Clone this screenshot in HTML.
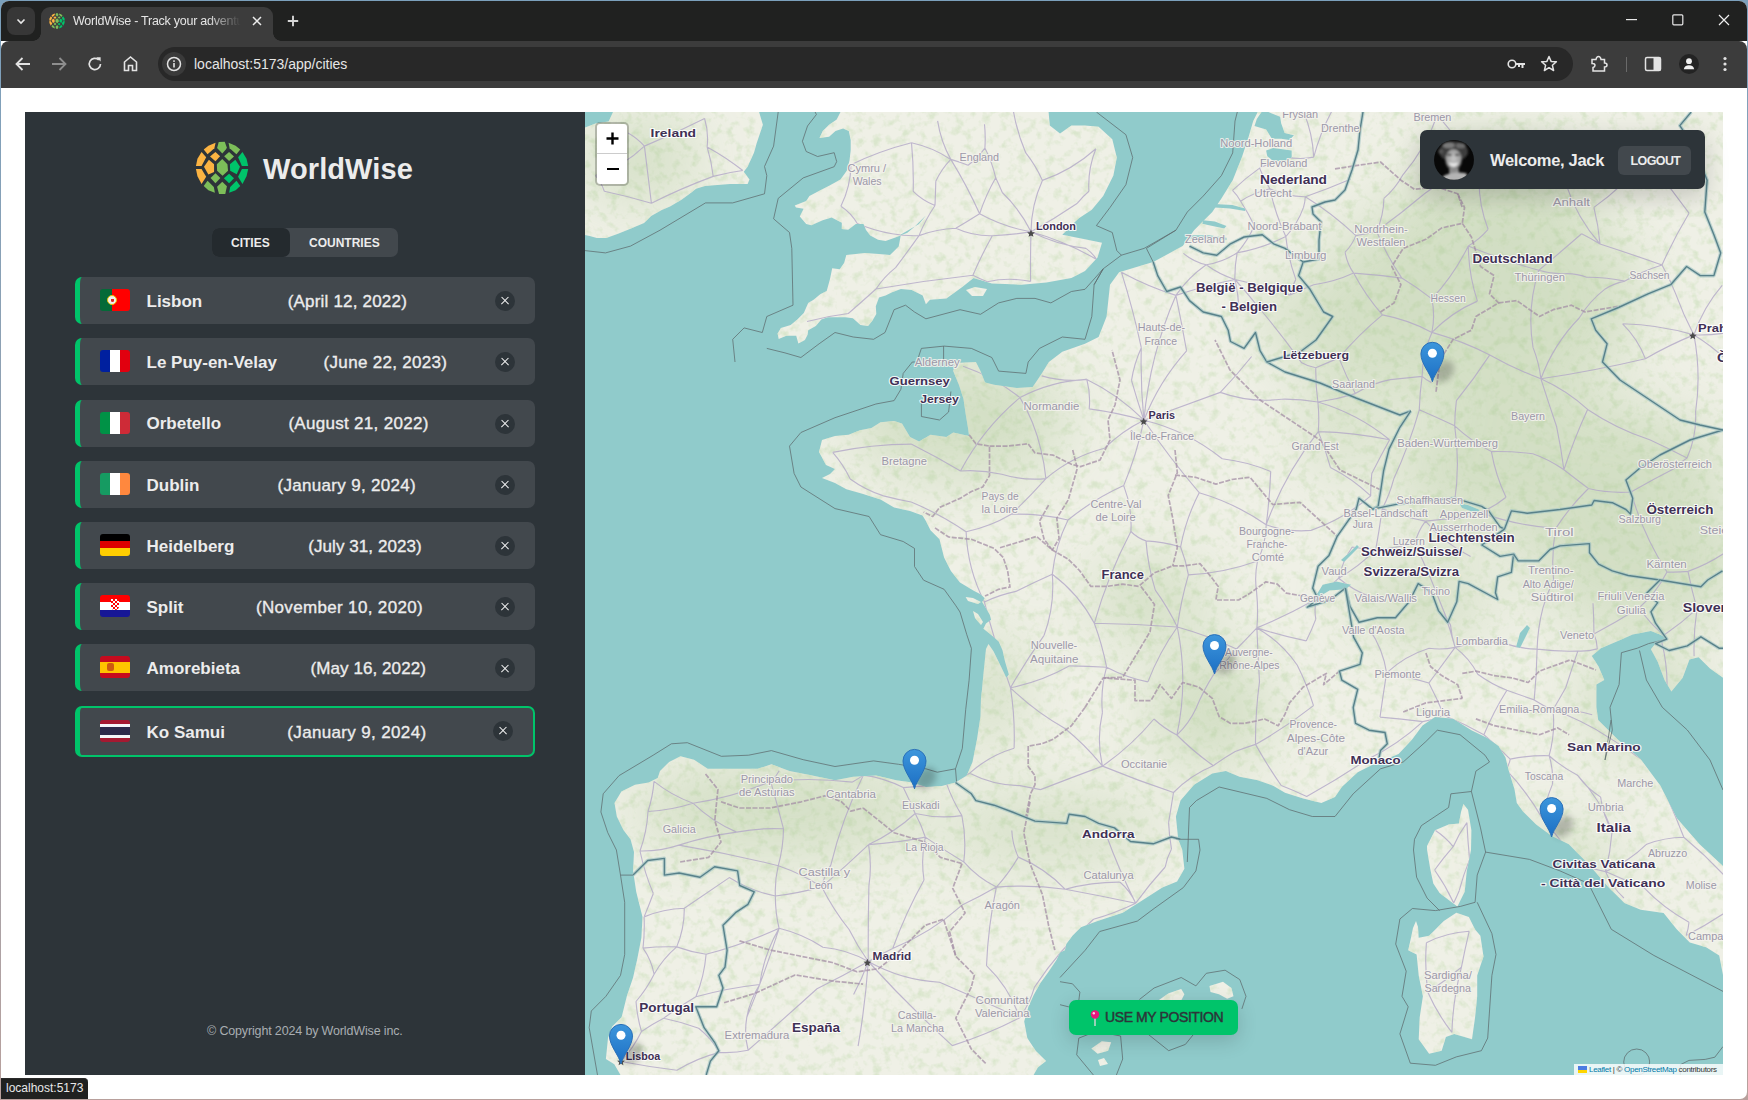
<!DOCTYPE html>
<html><head><meta charset="utf-8">
<style>
*{box-sizing:border-box;margin:0;padding:0}
html,body{width:1748px;height:1100px;overflow:hidden;font-family:"Liberation Sans",sans-serif}
body{background:linear-gradient(#7ba0bc,#a9a3a8 80%,#b8a09c)}
.abs{position:absolute}
#win{position:absolute;left:1px;top:1px;width:1746px;height:1098px;background:#fff;border-radius:8px 8px 7px 7px;overflow:hidden}
#tabstrip{position:absolute;left:1px;top:1px;width:1746px;height:40px;background:#202120;border-radius:8px 8px 0 0}
#toolbar{position:absolute;left:1px;top:41px;width:1746px;height:47px;background:#3c3c3c;border-radius:8px 8px 0 0}
#tab{position:absolute;left:41px;top:7px;width:232px;height:34px;background:#3c3c3c;border-radius:9px 9px 0 0}
#tab:before,#tab:after{content:"";position:absolute;bottom:0;width:8px;height:8px;background:radial-gradient(circle at 0 0,#202120 8px,#3c3c3c 8.5px)}
#tab:before{left:-8px;background:radial-gradient(circle at 0 0,#202120 7.5px,#3c3c3c 8px)}
#tab:after{right:-8px;background:radial-gradient(circle at 100% 0,#202120 7.5px,#3c3c3c 8px)}
#omni{position:absolute;left:158px;top:47px;width:1415px;height:34px;background:#282828;border-radius:17px}
.ico{position:absolute}
#sidebar{position:absolute;left:25px;top:112px;width:560px;height:963px;background:#2d3439}
#map{position:absolute;left:585px;top:112px;width:1138px;height:963px;background:#90cbcb;overflow:hidden}
.item{position:absolute;left:75px;width:460px;height:47px;background:#42484d;border-radius:7px;border-left:5px solid #00c46a}
.item.act{border:2px solid #00c46a;border-left:5px solid #00c46a;height:51px}
.flag{position:absolute;left:20px;top:12px;width:30px;height:22px;border-radius:3px;overflow:hidden}
.cname{position:absolute;left:66.5px;top:14.8px;font-size:17px;line-height:20px;font-weight:bold;color:#ececec;white-space:nowrap}
.cdate{position:absolute;top:14.8px;font-size:17px;line-height:20px;color:#ececec;-webkit-text-stroke:0.35px #ececec;white-space:nowrap}
.del{position:absolute;width:20px;height:20px;border-radius:50%;background:#2d3439}
.del:before,.del:after{content:'';position:absolute;left:5px;top:9.4px;width:10px;height:1.25px;background:#f6f6f6;transform:rotate(45deg)}
.del:after{transform:rotate(-45deg)}
.rl{font-family:'Liberation Sans',sans-serif;font-size:11px;fill:#9c98a8;stroke:#f4f3ee;stroke-width:2.2px;stroke-opacity:.85;paint-order:stroke;stroke-linejoin:round}
.bl{font-family:'Liberation Sans',sans-serif;font-weight:bold;fill:#3f3055;stroke:#fff;stroke-width:2.2px;stroke-opacity:.9;paint-order:stroke;stroke-linejoin:round}
</style></head><body>
<div id="win"></div>
<div id="tabstrip">
</div>
<div id="toolbar"></div>
<div class="abs" style="left:7px;top:7px;width:28px;height:28px;border-radius:8px;background:#373737"></div>
<svg class="ico" style="left:15px;top:15px" width="12" height="12" viewBox="0 0 12 12"><path d="M2.5,4.5 L6,8 L9.5,4.5" fill="none" stroke="#e8e8e8" stroke-width="1.6"/></svg>
<div id="tab"></div>
<!-- favicon -->
<svg class="ico" style="left:48px;top:12px" width="18" height="18" viewBox="0 0 1100 1100"><path d="M215,212 L300,140 L432,88 L410,190 L285,298Z" fill="#fbb342"/><path d="M490,75 L600,70 L640,180 L620,210 L555,285 L460,185Z" fill="#7dbe59"/><path d="M670,88 L800,140 L885,212 L815,298 L690,190Z" fill="#7dbe59"/><path d="M175,258 L260,355 L175,515 L72,515 L100,380Z" fill="#fbb342"/><path d="M72,570 L175,570 L260,710 L175,845 L100,700Z" fill="#fbb342"/><path d="M330,340 L430,255 L515,335 L430,425Z" fill="#fbb342"/><path d="M590,335 L680,255 L770,340 L680,420Z" fill="#7dbe59"/><path d="M220,525 L310,400 L405,480 L405,625 L300,670Z" fill="#fbb342"/><path d="M555,385 L650,480 L660,600 L560,690 L460,600 L455,480Z" fill="#7dbe59"/><path d="M795,400 L880,525 L820,665 L700,600 L695,480Z" fill="#00c46a"/><path d="M925,258 L1000,380 L1030,515 L915,515 L845,355Z" fill="#00c46a"/><path d="M915,570 L1030,570 L1000,700 L925,845 L845,710Z" fill="#00c46a"/><path d="M340,735 L430,645 L520,735 L430,830Z" fill="#7dbe59"/><path d="M585,740 L680,655 L770,740 L680,830Z" fill="#00c46a"/><path d="M215,880 L285,785 L400,900 L420,1005 L300,960Z" fill="#7dbe59"/><path d="M460,895 L555,800 L640,885 L610,1025 L495,1025Z" fill="#7dbe59"/><path d="M680,1005 L700,900 L815,785 L885,880 L800,960Z" fill="#00c46a"/></svg>
<div class="abs" style="left:73px;top:13px;width:168px;height:16px;overflow:hidden;font-size:12.5px;letter-spacing:-0.25px;line-height:16px;color:#e6e6e6;white-space:nowrap;-webkit-mask-image:linear-gradient(90deg,#000 80%,transparent)">WorldWise - Track your adventures</div>
<svg class="ico" style="left:252px;top:16px" width="10" height="10" viewBox="0 0 10 10"><path d="M1,1 L9,9 M9,1 L1,9" stroke="#ececec" stroke-width="1.5"/></svg>
<svg class="ico" style="left:287px;top:15px" width="12" height="12" viewBox="0 0 12 12"><path d="M6,0.8 L6,11.2 M0.8,6 L11.2,6" stroke="#d6d6d6" stroke-width="1.9"/></svg>
<!-- window controls -->
<svg class="ico" style="left:1626px;top:19px" width="12" height="2" viewBox="0 0 12 2"><rect x="0" y="0" width="11" height="1.2" fill="#e8e8e8"/></svg>
<svg class="ico" style="left:1672px;top:14px" width="12" height="12" viewBox="0 0 12 12"><rect x="0.8" y="0.8" width="10" height="10" rx="1" fill="none" stroke="#e8e8e8" stroke-width="1.2"/></svg>
<svg class="ico" style="left:1718px;top:14px" width="12" height="12" viewBox="0 0 12 12"><path d="M1,1 L11,11 M11,1 L1,11" stroke="#f0f0f0" stroke-width="1.2"/></svg>
<!-- nav -->
<svg class="ico" style="left:14px;top:56px" width="18" height="16" viewBox="0 0 18 16"><path d="M16,8 L2.5,8 M8.5,2 L2.5,8 L8.5,14" fill="none" stroke="#e3e3e3" stroke-width="1.8"/></svg>
<svg class="ico" style="left:50px;top:56px" width="18" height="16" viewBox="0 0 18 16"><path d="M2,8 L15.5,8 M9.5,2 L15.5,8 L9.5,14" fill="none" stroke="#8e8e8e" stroke-width="1.8"/></svg>
<svg class="ico" style="left:87px;top:56px" width="16" height="16" viewBox="0 0 16 16"><path d="M13.5,8 A5.6,5.6 0 1 1 11.8,3.9" fill="none" stroke="#e3e3e3" stroke-width="1.7"/><path d="M9.2,1.2 L13.6,1.2 L13.6,5.6 Z" fill="#e3e3e3"/></svg>
<svg class="ico" style="left:122px;top:55px" width="17" height="17" viewBox="0 0 17 17"><path d="M2.5,15.5 L2.5,7 L8.5,2 L14.5,7 L14.5,15.5 L10.5,15.5 L10.5,10.5 L6.5,10.5 L6.5,15.5 Z" fill="none" stroke="#e3e3e3" stroke-width="1.6"/></svg>
<div id="omni"></div>
<div class="abs" style="left:162px;top:52px;width:24px;height:24px;border-radius:50%;background:#3a3a3a"></div>
<svg class="ico" style="left:166px;top:56px" width="16" height="16" viewBox="0 0 16 16"><circle cx="8" cy="8" r="6.5" fill="none" stroke="#e3e3e3" stroke-width="1.5"/><rect x="7.2" y="7" width="1.6" height="4.5" fill="#e3e3e3"/><rect x="7.2" y="4.3" width="1.6" height="1.6" fill="#e3e3e3"/></svg>
<div class="abs" style="left:194px;top:55px;font-size:14px;line-height:18px;color:#e6e6e6;white-space:nowrap">localhost:5173/app/cities</div>
<!-- right toolbar icons -->
<svg class="ico" style="left:1507px;top:57px" width="20" height="14" viewBox="0 0 20 14"><circle cx="5" cy="7" r="3.8" fill="none" stroke="#e3e3e3" stroke-width="1.6"/><path d="M8.8,6 L18,6 L18,8 L16.5,8 L16.5,11 L14.5,11 L14.5,8 L13,8 L13,10 L11,10 L11,8 L8.8,8 Z" fill="#e3e3e3"/></svg>
<svg class="ico" style="left:1540px;top:55px" width="18" height="17" viewBox="0 0 18 17"><path d="M9,1.5 L11.1,6.4 L16.4,6.8 L12.4,10.3 L13.6,15.5 L9,12.7 L4.4,15.5 L5.6,10.3 L1.6,6.8 L6.9,6.4 Z" fill="none" stroke="#e3e3e3" stroke-width="1.5" stroke-linejoin="round"/></svg>
<svg class="ico" style="left:1590px;top:55px" width="18" height="18" viewBox="0 0 18 18"><path d="M2,4.5 L6,4.5 Q6.5,1.5 8.5,1.5 Q10.5,1.5 11,4.5 L14.5,4.5 L14.5,8 Q17,8 17,10 Q17,12 14.5,12 L14.5,16 L3,16 L3,12.5 Q5,12 5,10.2 Q5,8.5 2,8.5 Z" fill="none" stroke="#e3e3e3" stroke-width="1.5"/></svg>
<div class="abs" style="left:1626px;top:57px;width:1px;height:15px;background:#6a6a6a"></div>
<svg class="ico" style="left:1644px;top:56px" width="18" height="16" viewBox="0 0 18 16"><rect x="1.5" y="1.5" width="15" height="13" rx="1.5" fill="none" stroke="#e3e3e3" stroke-width="1.5"/><rect x="9.5" y="1.5" width="7" height="13" fill="#e3e3e3"/></svg>
<div class="abs" style="left:1679px;top:54px;width:20px;height:20px;border-radius:50%;background:#232323"></div>
<svg class="ico" style="left:1681px;top:56px" width="16" height="16" viewBox="0 0 16 16"><circle cx="8" cy="5.2" r="2.9" fill="#f0f0f0"/><path d="M2.8,13.2 Q3.5,9.3 8,9.3 Q12.5,9.3 13.2,13.2 Z" fill="#f0f0f0"/></svg>
<svg class="ico" style="left:1721px;top:55px" width="8" height="18" viewBox="0 0 8 18"><circle cx="4" cy="3.5" r="1.6" fill="#e3e3e3"/><circle cx="4" cy="9" r="1.6" fill="#e3e3e3"/><circle cx="4" cy="14.5" r="1.6" fill="#e3e3e3"/></svg>

<div id="sidebar"></div>
<!-- logo -->
<svg class="ico" style="left:192px;top:138px" width="60" height="60" viewBox="0 0 1100 1100"><path d="M215,212 L300,140 L432,88 L410,190 L285,298Z" fill="#fbb342"/><path d="M490,75 L600,70 L640,180 L620,210 L555,285 L460,185Z" fill="#7dbe59"/><path d="M670,88 L800,140 L885,212 L815,298 L690,190Z" fill="#7dbe59"/><path d="M175,258 L260,355 L175,515 L72,515 L100,380Z" fill="#fbb342"/><path d="M72,570 L175,570 L260,710 L175,845 L100,700Z" fill="#fbb342"/><path d="M330,340 L430,255 L515,335 L430,425Z" fill="#fbb342"/><path d="M590,335 L680,255 L770,340 L680,420Z" fill="#7dbe59"/><path d="M220,525 L310,400 L405,480 L405,625 L300,670Z" fill="#fbb342"/><path d="M555,385 L650,480 L660,600 L560,690 L460,600 L455,480Z" fill="#7dbe59"/><path d="M795,400 L880,525 L820,665 L700,600 L695,480Z" fill="#00c46a"/><path d="M925,258 L1000,380 L1030,515 L915,515 L845,355Z" fill="#00c46a"/><path d="M915,570 L1030,570 L1000,700 L925,845 L845,710Z" fill="#00c46a"/><path d="M340,735 L430,645 L520,735 L430,830Z" fill="#7dbe59"/><path d="M585,740 L680,655 L770,740 L680,830Z" fill="#00c46a"/><path d="M215,880 L285,785 L400,900 L420,1005 L300,960Z" fill="#7dbe59"/><path d="M460,895 L555,800 L640,885 L610,1025 L495,1025Z" fill="#7dbe59"/><path d="M680,1005 L700,900 L815,785 L885,880 L800,960Z" fill="#00c46a"/></svg>
<div class="abs" id="brand" style="left:263px;top:152px;letter-spacing:0.1px;font-size:29px;line-height:34px;font-weight:bold;color:#ececec;white-space:nowrap">WorldWise</div>
<!-- tabs -->
<div class="abs" style="left:212px;top:228px;width:186px;height:29px;border-radius:7px;background:#42484d"></div>
<div class="abs" style="left:212px;top:228px;width:78px;height:29px;border-radius:7px;background:#242a2e"></div>
<div class="abs" id="tcities" style="left:231px;top:236px;font-size:12px;line-height:14px;font-weight:bold;color:#ececec">CITIES</div>
<div class="abs" id="tcountries" style="left:309px;top:236px;font-size:12px;line-height:14px;font-weight:bold;color:#ececec">COUNTRIES</div>
<div class="item" style="top:277px"><div class="flag" style="top:12px"><div style="position:absolute;left:0;top:0;width:12px;height:22px;background:#046a38"></div><div style="position:absolute;left:12px;top:0;width:18px;height:22px;background:#f00"></div><div style="position:absolute;left:7px;top:6px;width:10px;height:10px;border-radius:50%;border:1.5px solid #e8c200;background:#f0f0f0"></div><div style="position:absolute;left:10.5px;top:9.5px;width:3px;height:3.5px;background:#d22;border-radius:0 0 2px 2px"></div></div><div class="cname">Lisbon</div><div class="cdate" style="left:207.7px;letter-spacing:0.194px">(April 12, 2022)</div><div class="del" style="left:415px;top:14px"></div></div><div class="item" style="top:338px"><div class="flag" style="top:12px"><div style="position:absolute;left:0;top:0;width:10px;height:22px;background:#00209f"></div><div style="position:absolute;left:10px;top:0;width:10px;height:22px;background:#fff"></div><div style="position:absolute;left:20px;top:0;width:10px;height:22px;background:#e1000f"></div></div><div class="cname">Le Puy-en-Velay</div><div class="cdate" style="left:243.6px;letter-spacing:0.307px">(June 22, 2023)</div><div class="del" style="left:415px;top:14px"></div></div><div class="item" style="top:399.5px"><div class="flag" style="top:12px"><div style="position:absolute;left:0;top:0;width:10px;height:22px;background:#009246"></div><div style="position:absolute;left:10px;top:0;width:10px;height:22px;background:#fff"></div><div style="position:absolute;left:20px;top:0;width:10px;height:22px;background:#ce2b37"></div></div><div class="cname">Orbetello</div><div class="cdate" style="left:208.4px;letter-spacing:0.300px">(August 21, 2022)</div><div class="del" style="left:415px;top:14px"></div></div><div class="item" style="top:460.8px"><div class="flag" style="top:12px"><div style="position:absolute;left:0;top:0;width:10px;height:22px;background:#169b62"></div><div style="position:absolute;left:10px;top:0;width:10px;height:22px;background:#fff"></div><div style="position:absolute;left:20px;top:0;width:10px;height:22px;background:#ff883e"></div></div><div class="cname">Dublin</div><div class="cdate" style="left:197.5px;letter-spacing:0.312px">(January 9, 2024)</div><div class="del" style="left:415px;top:14px"></div></div><div class="item" style="top:521.8px"><div class="flag" style="top:12px"><div style="position:absolute;left:0;top:0;width:30px;height:7.3px;background:#000"></div><div style="position:absolute;left:0;top:7.3px;width:30px;height:7.4px;background:#dd0000"></div><div style="position:absolute;left:0;top:14.7px;width:30px;height:7.3px;background:#ffce00"></div></div><div class="cname">Heidelberg</div><div class="cdate" style="left:228.2px;letter-spacing:0.080px">(July 31, 2023)</div><div class="del" style="left:415px;top:14px"></div></div><div class="item" style="top:583.1px"><div class="flag" style="top:12px"><div style="position:absolute;left:0;top:0;width:30px;height:7.3px;background:#f00"></div><div style="position:absolute;left:0;top:7.3px;width:30px;height:7.4px;background:#fff"></div><div style="position:absolute;left:0;top:14.7px;width:30px;height:7.3px;background:#171796"></div><div style="position:absolute;left:11px;top:4px;width:8px;height:11px;background:repeating-conic-gradient(#f00 0 25%,#fff 0 50%) 0 0/4px 4px;border-radius:0 0 4px 4px"></div></div><div class="cname">Split</div><div class="cdate" style="left:175.9px;letter-spacing:0.342px">(November 10, 2020)</div><div class="del" style="left:415px;top:14px"></div></div><div class="item" style="top:644.2px"><div class="flag" style="top:12px"><div style="position:absolute;left:0;top:0;width:30px;height:5.5px;background:#c60b1e"></div><div style="position:absolute;left:0;top:5.5px;width:30px;height:11px;background:#ffc400"></div><div style="position:absolute;left:0;top:16.5px;width:30px;height:5.5px;background:#c60b1e"></div><div style="position:absolute;left:7px;top:7px;width:7px;height:8px;background:#ad1519;opacity:.6;border-radius:2px"></div></div><div class="cname">Amorebieta</div><div class="cdate" style="left:230.5px;letter-spacing:0.079px">(May 16, 2022)</div><div class="del" style="left:415px;top:14px"></div></div><div class="item act" style="top:706px"><div class="flag" style="top:12px"><div style="position:absolute;left:0;top:0;width:30px;height:22px;background:#a51931"></div><div style="position:absolute;left:0;top:3.7px;width:30px;height:14.6px;background:#f4f5f8"></div><div style="position:absolute;left:0;top:7.3px;width:30px;height:7.4px;background:#2d2a4a"></div></div><div class="cname">Ko Samui</div><div class="cdate" style="left:207.3px;letter-spacing:0.347px">(January 9, 2024)</div><div class="del" style="left:413px;top:13px"></div></div>
<div class="abs" id="copy" style="left:207px;top:1024px;letter-spacing:-0.15px;font-size:12.5px;line-height:15px;color:#a9aeb2;white-space:nowrap">&#169; Copyright 2024 by WorldWise inc.</div>

<div id="map"><svg class="abs" style="left:0;top:0" width="1138" height="963" viewBox="585 112 1138 963"><defs><linearGradient id="mg" x1="0" y1="0" x2="0" y2="1"><stop offset="0" stop-color="#3d96dc"/><stop offset="1" stop-color="#1c6fc4"/></linearGradient><filter id="bigblur" x="-50%" y="-50%" width="200%" height="200%"><feGaussianBlur stdDeviation="30"/></filter><filter id="blur" x="-50%" y="-50%" width="200%" height="200%"><feGaussianBlur stdDeviation="3"/></filter><filter id="tex" x="0" y="0" width="100%" height="100%"><feTurbulence type="fractalNoise" baseFrequency="0.11" numOctaves="3" seed="7" result="n"/><feColorMatrix in="n" type="matrix" values="0 0 0 0 0.66  0 0 0 0 0.77  0 0 0 0 0.56  3.2 0 0 0 -1.55" /></filter></defs><rect x="585" y="112" width="1138" height="963" fill="#eff0e6"/><path d="M585.0,112.0 L840.5,112.0 L836.7,119.6 L829.1,124.7 L822.7,131.1 L819.5,138.1 L829.1,136.8 L835.5,131.1 L843.1,128.5 L848.8,131.1 L850.7,140.0 L850.7,150.2 L849.5,160.4 L846.9,170.5 L840.5,179.5 L829.1,185.8 L818.9,190.9 L809.4,196.0 L806.2,201.1 L794.7,205.5 L796.0,207.5 L803.6,208.7 L799.8,216.4 L806.2,224.0 L811.3,225.3 L822.7,220.2 L831.6,217.6 L841.8,222.7 L841.8,229.1 L848.2,229.7 L855.8,224.0 L863.5,224.0 L866.0,230.0 L870.3,235.5 L878.0,239.8 L885.6,240.9 L895.4,237.6 L907.4,232.7 L914.5,226.8 L925.9,215.4 L919.0,224.0 L900.9,234.4 L898.7,246.4 L890.0,255.1 L879.0,254.0 L864.9,252.9 L846.3,255.1 L844.2,262.7 L839.8,269.3 L832.2,268.2 L830.0,279.1 L826.7,291.1 L820.2,294.3 L813.6,299.8 L808.2,303.1 L803.8,312.9 L797.3,319.4 L790.7,324.9 L780.9,328.1 L777.6,333.6 L778.7,339.1 L786.4,335.8 L796.2,335.8 L798.4,343.4 L804.9,340.1 L807.6,334.7 L808.2,330.3 L815.8,326.0 L821.3,319.4 L827.8,317.2 L845.2,317.2 L852.9,318.3 L860.5,324.9 L868.1,326.0 L872.5,320.5 L876.3,314.0 L875.8,306.3 L879.0,297.6 L885.6,295.4 L892.1,292.2 L900.9,288.9 L911.8,290.0 L922.7,295.4 L925.9,304.2 L930.0,299.8 L946.4,298.4 L962.3,287.0 L973.6,277.9 L991.8,283.6 L1021.4,284.7 L1046.4,282.5 L1071.4,277.9 L1085.0,271.1 L1097.5,257.5 L1102.0,242.7 L1085.0,239.3 L1062.3,234.7 L1078.2,218.8 L1085.0,214.3 L1091.8,209.7 L1103.2,196.1 L1113.4,175.6 L1116.8,157.5 L1112.3,139.3 L1098.6,126.8 L1085.0,125.6 L1071.4,125.6 L1060.0,133.6 L1049.8,125.6 L1048.6,112.0 L1257.7,112.0 L1253.2,121.1 L1248.6,137.0 L1241.8,157.5 L1232.7,180.2 L1221.4,198.4 L1212.3,212.0 L1194.1,230.2 L1182.7,246.1 L1153.2,262.0 L1119.1,272.2 L1110.0,284.7 L1106.6,316.5 L1098.6,337.0 L1085.0,343.8 L1062.3,351.8 L1048.9,362.0 L1041.8,373.4 L1032.7,387.0 L1016.8,388.1 L994.1,384.7 L985.0,382.5 L980.5,371.1 L975.9,362.0 L955.5,363.1 L953.2,371.1 L958.9,384.7 L963.4,398.4 L965.7,414.3 L968.0,427.9 L969.1,435.9 L953.2,432.5 L946.4,437.0 L930.5,434.7 L919.1,441.5 L910.0,437.0 L902.0,423.4 L894.1,421.1 L880.5,422.2 L871.4,427.9 L860.0,430.2 L848.6,434.7 L835.0,435.9 L822.0,440.0 L819.0,452.0 L826.0,465.0 L835.0,469.0 L830.0,474.0 L822.0,478.0 L835.0,483.0 L846.4,489.3 L862.3,493.8 L880.5,499.5 L894.1,507.5 L910.0,510.9 L922.5,515.4 L925.9,521.1 L930.5,530.2 L939.5,539.3 L941.8,548.4 L944.1,557.5 L950.9,571.1 L960.0,582.5 L973.3,590.5 L980.9,594.4 L984.7,598.2 L982.2,602.0 L986.0,608.3 L989.8,614.7 L991.1,619.8 L986.0,623.6 L983.4,628.7 L989.8,633.8 L998.7,641.4 L1002.5,650.3 L1005.1,661.8 L1008.9,674.5 L1006.3,677.7 L1001.2,666.9 L993.6,651.6 L988.5,644.0 L986.0,649.1 L984.7,661.8 L983.4,674.5 L982.2,687.2 L980.9,700.0 L980.5,716.5 L977.0,739.3 L972.5,762.0 L966.8,775.6 L955.5,782.5 L941.8,785.9 L925.9,787.0 L912.3,782.5 L896.4,780.2 L875.9,775.6 L853.2,776.8 L835.0,780.2 L812.3,775.6 L789.5,771.1 L771.4,764.3 L757.7,768.8 L721.4,768.8 L707.7,768.8 L694.1,759.7 L680.5,756.3 L669.1,762.0 L660.0,771.1 L657.7,777.9 L648.6,782.5 L635.0,784.7 L621.4,791.5 L614.5,802.9 L616.8,816.5 L623.6,830.2 L630.5,839.3 L634.0,852.0 L633.1,870.9 L636.2,891.8 L642.5,916.9 L641.4,937.8 L637.3,958.7 L633.1,977.5 L626.8,996.3 L621.6,1017.2 L612.2,1026.6 L608.0,1038.1 L605.9,1059.0 L614.3,1064.3 L620.5,1075.0 L585.0,1075.0Z" fill="#90cbcb"/><path d="M1033.6,1075.0 L1037.8,1067.4 L1046.1,1061.1 L1035.7,1050.7 L1027.3,1038.1 L1024.2,1021.4 L1028.4,1006.8 L1033.6,995.3 L1039.9,983.8 L1048.2,972.3 L1056.6,959.7 L1060.0,952.4 L1064.9,950.3 L1066.3,944.1 L1072.5,935.7 L1080.9,927.3 L1097.6,921.1 L1122.7,912.7 L1139.4,902.3 L1162.4,887.6 L1177.1,881.4 L1184.4,868.8 L1182.3,850.0 L1178.2,839.3 L1175.9,816.5 L1180.5,800.6 L1194.1,784.7 L1212.3,773.4 L1225.9,771.1 L1239.5,776.8 L1257.7,780.2 L1273.6,785.9 L1285.0,792.7 L1303.2,798.4 L1321.4,802.9 L1335.0,797.0 L1341.8,787.0 L1357.7,772.2 L1375.9,763.1 L1398.6,754.0 L1412.3,739.3 L1422.5,725.6 L1435.0,717.0 L1453.2,718.8 L1471.4,730.2 L1487.3,738.1 L1498.6,746.1 L1505.5,757.5 L1508.9,771.1 L1514.5,789.3 L1516.8,803.0 L1523.0,811.6 L1536.1,824.6 L1551.8,836.1 L1568.8,844.3 L1588.4,863.9 L1608.0,886.8 L1624.4,903.1 L1640.7,909.7 L1663.6,912.9 L1676.7,929.3 L1689.8,942.4 L1706.1,947.3 L1719.2,955.4 L1723.0,975.1 L1723.0,1075.0Z" fill="#90cbcb"/><path d="M1723.0,866.0 L1699.6,844.3 L1676.7,818.1 L1660.3,785.4 L1640.7,759.2 L1617.8,739.6 L1598.2,720.0 L1596.4,707.3 L1596.4,684.5 L1604.3,680.0 L1598.6,666.4 L1591.8,656.1 L1600.9,648.2 L1616.8,641.4 L1632.7,634.5 L1650.9,631.1 L1660.0,634.5 L1668.0,639.1 L1655.5,643.6 L1650.9,649.3 L1657.7,661.8 L1664.5,680.0 L1671.4,691.4 L1682.7,677.7 L1689.5,659.5 L1698.6,657.3 L1710.0,668.6 L1723.0,677.7Z" fill="#90cbcb"/><path d="M1268.4,112.0 L1280.1,116.7 L1281.2,123.6 L1284.7,132.9 L1294.0,135.3 L1289.4,139.9 L1281.2,138.8 L1271.9,138.8 L1266.1,129.5 L1254.5,126.0 L1256.8,119.0 L1261.5,112.0Z" fill="#90cbcb"/><path d="M1266.1,150.4 L1273.1,148.1 L1291.7,150.4 L1291.7,157.4 L1284.7,160.9 L1273.1,160.9 L1267.3,156.2Z" fill="#90cbcb"/><path d="M1214.9,203.9 L1232.4,205.1 L1245.2,208.6 L1245.2,210.9 L1230.0,208.6 L1214.9,207.4Z" fill="#90cbcb"/><path d="M1203.3,220.2 L1214.9,221.4 L1226.5,226.0 L1224.2,228.4 L1212.6,226.0 L1202.1,223.7Z" fill="#90cbcb"/><path d="M1189.3,235.3 L1209.1,235.3 L1226.5,237.7 L1226.5,240.0 L1209.1,238.8 L1189.3,238.8Z" fill="#90cbcb"/><path d="M1322.7,584.8 L1336.4,581.4 L1351.1,584.8 L1345.5,589.3 L1329.5,590.5 L1318.2,597.3 L1317.0,594.0Z" fill="#90cbcb"/><path d="M1459.0,503.0 L1468.0,505.0 L1480.0,510.0 L1476.0,513.0 L1462.0,508.0Z" fill="#90cbcb"/><path d="M1341.0,560.0 L1350.0,552.0 L1357.0,545.0 L1359.0,547.0 L1344.0,562.0Z" fill="#90cbcb"/><path d="M1516.0,647.0 L1520.0,633.0 L1527.0,625.0 L1530.0,628.0 L1524.0,640.0 L1520.0,648.0Z" fill="#90cbcb"/><path d="M585.0,127.4 L596.2,123.2 L608.6,121.5 L613.0,112.0 L759.1,112.0 L762.9,124.7 L756.5,143.8 L754.0,152.7 L747.6,166.7 L743.8,171.8 L749.5,179.5 L747.6,183.9 L730.0,184.0 L705.0,185.9 L696.1,188.8 L691.4,192.4 L681.9,199.5 L670.1,206.6 L661.8,210.1 L651.2,216.0 L644.1,223.1 L629.9,229.0 L618.1,233.7 L606.3,237.9 L596.8,237.9 L589.7,236.1 L585.0,234.9Z" fill="#eff0e6"/><path d="M1463.4,804.0 L1468.0,809.7 L1471.4,830.2 L1471.0,850.0 L1466.8,870.9 L1464.7,891.8 L1457.4,906.4 L1449.0,900.2 L1439.6,892.9 L1433.3,883.4 L1430.2,868.8 L1427.1,850.0 L1427.0,846.1 L1435.0,830.2 L1448.6,824.5 L1458.9,823.4 L1461.0,812.0Z" fill="#eff0e6"/><path d="M1456.3,912.7 L1468.9,916.9 L1475.1,929.4 L1480.4,935.7 L1483.5,956.6 L1477.2,975.4 L1477.2,996.3 L1475.1,1017.2 L1472.0,1039.2 L1454.2,1033.9 L1445.9,1037.1 L1441.7,1050.7 L1429.1,1053.8 L1418.7,1039.2 L1419.7,1017.2 L1422.9,996.3 L1418.7,975.4 L1416.6,954.5 L1408.2,950.3 L1411.4,935.7 L1413.0,928.0 L1416.0,921.0 L1418.0,927.0 L1418.7,937.8 L1429.1,935.7 L1443.8,921.1Z" fill="#eff0e6"/><path d="M1158.2,1000.5 L1168.7,993.2 L1181.2,989.0 L1184.4,994.2 L1181.2,1000.5 L1175.0,1010.0 L1160.0,1010.0Z" fill="#eff0e6"/><path d="M1209.5,985.9 L1223.0,981.7 L1231.4,988.0 L1233.5,996.3 L1227.2,998.8 L1218.9,994.2 L1210.5,992.1Z" fill="#eff0e6"/><path d="M1091.4,1048.6 L1101.8,1041.3 L1111.2,1042.3 L1108.1,1050.7 L1097.6,1053.8Z" fill="#eff0e6"/><path d="M1098.0,1060.0 L1104.0,1058.0 L1108.0,1064.0 L1100.0,1066.0Z" fill="#eff0e6"/><path d="M966.0,290.0 L975.0,287.0 L987.0,289.0 L983.0,296.0 L972.0,296.0Z" fill="#eff0e6"/><path d="M965.6,597.0 L973.0,598.0 L980.9,602.0 L978.0,604.0 L968.0,601.0Z" fill="#eff0e6"/><path d="M973.0,611.0 L978.0,614.0 L983.0,622.0 L981.0,625.0 L975.0,618.0Z" fill="#eff0e6"/><mask id="lm"><rect x="585" y="112" width="1138" height="963" fill="#fff"/><path d="M585.0,112.0 L840.5,112.0 L836.7,119.6 L829.1,124.7 L822.7,131.1 L819.5,138.1 L829.1,136.8 L835.5,131.1 L843.1,128.5 L848.8,131.1 L850.7,140.0 L850.7,150.2 L849.5,160.4 L846.9,170.5 L840.5,179.5 L829.1,185.8 L818.9,190.9 L809.4,196.0 L806.2,201.1 L794.7,205.5 L796.0,207.5 L803.6,208.7 L799.8,216.4 L806.2,224.0 L811.3,225.3 L822.7,220.2 L831.6,217.6 L841.8,222.7 L841.8,229.1 L848.2,229.7 L855.8,224.0 L863.5,224.0 L866.0,230.0 L870.3,235.5 L878.0,239.8 L885.6,240.9 L895.4,237.6 L907.4,232.7 L914.5,226.8 L925.9,215.4 L919.0,224.0 L900.9,234.4 L898.7,246.4 L890.0,255.1 L879.0,254.0 L864.9,252.9 L846.3,255.1 L844.2,262.7 L839.8,269.3 L832.2,268.2 L830.0,279.1 L826.7,291.1 L820.2,294.3 L813.6,299.8 L808.2,303.1 L803.8,312.9 L797.3,319.4 L790.7,324.9 L780.9,328.1 L777.6,333.6 L778.7,339.1 L786.4,335.8 L796.2,335.8 L798.4,343.4 L804.9,340.1 L807.6,334.7 L808.2,330.3 L815.8,326.0 L821.3,319.4 L827.8,317.2 L845.2,317.2 L852.9,318.3 L860.5,324.9 L868.1,326.0 L872.5,320.5 L876.3,314.0 L875.8,306.3 L879.0,297.6 L885.6,295.4 L892.1,292.2 L900.9,288.9 L911.8,290.0 L922.7,295.4 L925.9,304.2 L930.0,299.8 L946.4,298.4 L962.3,287.0 L973.6,277.9 L991.8,283.6 L1021.4,284.7 L1046.4,282.5 L1071.4,277.9 L1085.0,271.1 L1097.5,257.5 L1102.0,242.7 L1085.0,239.3 L1062.3,234.7 L1078.2,218.8 L1085.0,214.3 L1091.8,209.7 L1103.2,196.1 L1113.4,175.6 L1116.8,157.5 L1112.3,139.3 L1098.6,126.8 L1085.0,125.6 L1071.4,125.6 L1060.0,133.6 L1049.8,125.6 L1048.6,112.0 L1257.7,112.0 L1253.2,121.1 L1248.6,137.0 L1241.8,157.5 L1232.7,180.2 L1221.4,198.4 L1212.3,212.0 L1194.1,230.2 L1182.7,246.1 L1153.2,262.0 L1119.1,272.2 L1110.0,284.7 L1106.6,316.5 L1098.6,337.0 L1085.0,343.8 L1062.3,351.8 L1048.9,362.0 L1041.8,373.4 L1032.7,387.0 L1016.8,388.1 L994.1,384.7 L985.0,382.5 L980.5,371.1 L975.9,362.0 L955.5,363.1 L953.2,371.1 L958.9,384.7 L963.4,398.4 L965.7,414.3 L968.0,427.9 L969.1,435.9 L953.2,432.5 L946.4,437.0 L930.5,434.7 L919.1,441.5 L910.0,437.0 L902.0,423.4 L894.1,421.1 L880.5,422.2 L871.4,427.9 L860.0,430.2 L848.6,434.7 L835.0,435.9 L822.0,440.0 L819.0,452.0 L826.0,465.0 L835.0,469.0 L830.0,474.0 L822.0,478.0 L835.0,483.0 L846.4,489.3 L862.3,493.8 L880.5,499.5 L894.1,507.5 L910.0,510.9 L922.5,515.4 L925.9,521.1 L930.5,530.2 L939.5,539.3 L941.8,548.4 L944.1,557.5 L950.9,571.1 L960.0,582.5 L973.3,590.5 L980.9,594.4 L984.7,598.2 L982.2,602.0 L986.0,608.3 L989.8,614.7 L991.1,619.8 L986.0,623.6 L983.4,628.7 L989.8,633.8 L998.7,641.4 L1002.5,650.3 L1005.1,661.8 L1008.9,674.5 L1006.3,677.7 L1001.2,666.9 L993.6,651.6 L988.5,644.0 L986.0,649.1 L984.7,661.8 L983.4,674.5 L982.2,687.2 L980.9,700.0 L980.5,716.5 L977.0,739.3 L972.5,762.0 L966.8,775.6 L955.5,782.5 L941.8,785.9 L925.9,787.0 L912.3,782.5 L896.4,780.2 L875.9,775.6 L853.2,776.8 L835.0,780.2 L812.3,775.6 L789.5,771.1 L771.4,764.3 L757.7,768.8 L721.4,768.8 L707.7,768.8 L694.1,759.7 L680.5,756.3 L669.1,762.0 L660.0,771.1 L657.7,777.9 L648.6,782.5 L635.0,784.7 L621.4,791.5 L614.5,802.9 L616.8,816.5 L623.6,830.2 L630.5,839.3 L634.0,852.0 L633.1,870.9 L636.2,891.8 L642.5,916.9 L641.4,937.8 L637.3,958.7 L633.1,977.5 L626.8,996.3 L621.6,1017.2 L612.2,1026.6 L608.0,1038.1 L605.9,1059.0 L614.3,1064.3 L620.5,1075.0 L585.0,1075.0Z" fill="#000"/><path d="M1033.6,1075.0 L1037.8,1067.4 L1046.1,1061.1 L1035.7,1050.7 L1027.3,1038.1 L1024.2,1021.4 L1028.4,1006.8 L1033.6,995.3 L1039.9,983.8 L1048.2,972.3 L1056.6,959.7 L1060.0,952.4 L1064.9,950.3 L1066.3,944.1 L1072.5,935.7 L1080.9,927.3 L1097.6,921.1 L1122.7,912.7 L1139.4,902.3 L1162.4,887.6 L1177.1,881.4 L1184.4,868.8 L1182.3,850.0 L1178.2,839.3 L1175.9,816.5 L1180.5,800.6 L1194.1,784.7 L1212.3,773.4 L1225.9,771.1 L1239.5,776.8 L1257.7,780.2 L1273.6,785.9 L1285.0,792.7 L1303.2,798.4 L1321.4,802.9 L1335.0,797.0 L1341.8,787.0 L1357.7,772.2 L1375.9,763.1 L1398.6,754.0 L1412.3,739.3 L1422.5,725.6 L1435.0,717.0 L1453.2,718.8 L1471.4,730.2 L1487.3,738.1 L1498.6,746.1 L1505.5,757.5 L1508.9,771.1 L1514.5,789.3 L1516.8,803.0 L1523.0,811.6 L1536.1,824.6 L1551.8,836.1 L1568.8,844.3 L1588.4,863.9 L1608.0,886.8 L1624.4,903.1 L1640.7,909.7 L1663.6,912.9 L1676.7,929.3 L1689.8,942.4 L1706.1,947.3 L1719.2,955.4 L1723.0,975.1 L1723.0,1075.0Z" fill="#000"/><path d="M1723.0,866.0 L1699.6,844.3 L1676.7,818.1 L1660.3,785.4 L1640.7,759.2 L1617.8,739.6 L1598.2,720.0 L1596.4,707.3 L1596.4,684.5 L1604.3,680.0 L1598.6,666.4 L1591.8,656.1 L1600.9,648.2 L1616.8,641.4 L1632.7,634.5 L1650.9,631.1 L1660.0,634.5 L1668.0,639.1 L1655.5,643.6 L1650.9,649.3 L1657.7,661.8 L1664.5,680.0 L1671.4,691.4 L1682.7,677.7 L1689.5,659.5 L1698.6,657.3 L1710.0,668.6 L1723.0,677.7Z" fill="#000"/><path d="M1268.4,112.0 L1280.1,116.7 L1281.2,123.6 L1284.7,132.9 L1294.0,135.3 L1289.4,139.9 L1281.2,138.8 L1271.9,138.8 L1266.1,129.5 L1254.5,126.0 L1256.8,119.0 L1261.5,112.0Z" fill="#000"/><path d="M1266.1,150.4 L1273.1,148.1 L1291.7,150.4 L1291.7,157.4 L1284.7,160.9 L1273.1,160.9 L1267.3,156.2Z" fill="#000"/><path d="M1214.9,203.9 L1232.4,205.1 L1245.2,208.6 L1245.2,210.9 L1230.0,208.6 L1214.9,207.4Z" fill="#000"/><path d="M1203.3,220.2 L1214.9,221.4 L1226.5,226.0 L1224.2,228.4 L1212.6,226.0 L1202.1,223.7Z" fill="#000"/><path d="M1189.3,235.3 L1209.1,235.3 L1226.5,237.7 L1226.5,240.0 L1209.1,238.8 L1189.3,238.8Z" fill="#000"/><path d="M1322.7,584.8 L1336.4,581.4 L1351.1,584.8 L1345.5,589.3 L1329.5,590.5 L1318.2,597.3 L1317.0,594.0Z" fill="#000"/><path d="M1459.0,503.0 L1468.0,505.0 L1480.0,510.0 L1476.0,513.0 L1462.0,508.0Z" fill="#000"/><path d="M1341.0,560.0 L1350.0,552.0 L1357.0,545.0 L1359.0,547.0 L1344.0,562.0Z" fill="#000"/><path d="M1516.0,647.0 L1520.0,633.0 L1527.0,625.0 L1530.0,628.0 L1524.0,640.0 L1520.0,648.0Z" fill="#000"/><path d="M585.0,127.4 L596.2,123.2 L608.6,121.5 L613.0,112.0 L759.1,112.0 L762.9,124.7 L756.5,143.8 L754.0,152.7 L747.6,166.7 L743.8,171.8 L749.5,179.5 L747.6,183.9 L730.0,184.0 L705.0,185.9 L696.1,188.8 L691.4,192.4 L681.9,199.5 L670.1,206.6 L661.8,210.1 L651.2,216.0 L644.1,223.1 L629.9,229.0 L618.1,233.7 L606.3,237.9 L596.8,237.9 L589.7,236.1 L585.0,234.9Z" fill="#fff"/><path d="M1463.4,804.0 L1468.0,809.7 L1471.4,830.2 L1471.0,850.0 L1466.8,870.9 L1464.7,891.8 L1457.4,906.4 L1449.0,900.2 L1439.6,892.9 L1433.3,883.4 L1430.2,868.8 L1427.1,850.0 L1427.0,846.1 L1435.0,830.2 L1448.6,824.5 L1458.9,823.4 L1461.0,812.0Z" fill="#fff"/><path d="M1456.3,912.7 L1468.9,916.9 L1475.1,929.4 L1480.4,935.7 L1483.5,956.6 L1477.2,975.4 L1477.2,996.3 L1475.1,1017.2 L1472.0,1039.2 L1454.2,1033.9 L1445.9,1037.1 L1441.7,1050.7 L1429.1,1053.8 L1418.7,1039.2 L1419.7,1017.2 L1422.9,996.3 L1418.7,975.4 L1416.6,954.5 L1408.2,950.3 L1411.4,935.7 L1413.0,928.0 L1416.0,921.0 L1418.0,927.0 L1418.7,937.8 L1429.1,935.7 L1443.8,921.1Z" fill="#fff"/><path d="M1158.2,1000.5 L1168.7,993.2 L1181.2,989.0 L1184.4,994.2 L1181.2,1000.5 L1175.0,1010.0 L1160.0,1010.0Z" fill="#fff"/><path d="M1209.5,985.9 L1223.0,981.7 L1231.4,988.0 L1233.5,996.3 L1227.2,998.8 L1218.9,994.2 L1210.5,992.1Z" fill="#fff"/><path d="M1091.4,1048.6 L1101.8,1041.3 L1111.2,1042.3 L1108.1,1050.7 L1097.6,1053.8Z" fill="#fff"/><path d="M1098.0,1060.0 L1104.0,1058.0 L1108.0,1064.0 L1100.0,1066.0Z" fill="#fff"/><path d="M966.0,290.0 L975.0,287.0 L987.0,289.0 L983.0,296.0 L972.0,296.0Z" fill="#fff"/><path d="M965.6,597.0 L973.0,598.0 L980.9,602.0 L978.0,604.0 L968.0,601.0Z" fill="#fff"/><path d="M973.0,611.0 L978.0,614.0 L983.0,622.0 L981.0,625.0 L975.0,618.0Z" fill="#fff"/></mask><rect x="585" y="112" width="1138" height="963" fill="#a9c48e" filter="url(#tex)" opacity="0.75" mask="url(#lm)"/><g mask="url(#lm)" filter="url(#bigblur)" opacity="0.35"><ellipse cx="1480" cy="300" rx="160" ry="110" fill="#9fbf86"/><ellipse cx="1560" cy="470" rx="170" ry="70" fill="#9fbf86"/><ellipse cx="1640" cy="560" rx="110" ry="70" fill="#9fbf86"/><ellipse cx="1420" cy="600" rx="70" ry="40" fill="#9fbf86"/><ellipse cx="1210" cy="710" rx="60" ry="60" fill="#9fbf86"/><ellipse cx="1050" cy="830" rx="110" ry="30" fill="#9fbf86"/><ellipse cx="780" cy="810" rx="150" ry="45" fill="#9fbf86"/><ellipse cx="1300" cy="320" rx="40" ry="40" fill="#9fbf86"/><ellipse cx="1340" cy="420" rx="30" ry="60" fill="#9fbf86"/><ellipse cx="1500" cy="200" rx="90" ry="60" fill="#9fbf86"/><ellipse cx="640" cy="160" rx="60" ry="40" fill="#9fbf86"/><ellipse cx="990" cy="690" rx="30" ry="60" fill="#9fbf86"/><ellipse cx="1560" cy="860" rx="60" ry="30" fill="#9fbf86"/><ellipse cx="1640" cy="700" rx="60" ry="50" fill="#9fbf86"/><ellipse cx="960" cy="420" rx="110" ry="60" fill="#9fbf86"/><ellipse cx="1150" cy="600" rx="60" ry="40" fill="#9fbf86"/></g><path d="M1031.0,231.8 Q1065.5,241.5 1096.6,259.4 M1031.0,231.8 Q1030.3,256.6 1030.6,281.4 M1031.0,231.8 Q1011.8,234.9 992.3,235.7 M992.3,235.7 Q981.6,254.9 972.9,275.2 M972.9,275.2 Q979.9,278.8 987.3,281.7 M987.3,281.7 Q1008.9,277.0 1030.6,281.4 M992.3,235.7 Q973.2,236.2 955.8,228.2 M955.8,228.2 Q936.8,228.9 919.0,235.6 M919.0,235.6 Q905.5,236.2 892.1,233.7 M892.1,233.7 Q874.1,230.8 857.3,223.5 M857.3,223.5 Q851.2,212.9 840.9,206.2 M919.0,235.6 Q907.6,251.8 895.6,267.6 M895.6,267.6 Q884.1,276.7 876.0,289.0 M876.0,289.0 Q862.3,301.4 848.3,313.5 M848.3,313.5 Q827.3,316.1 807.0,321.5 M1031.0,231.8 Q1003.8,227.1 979.6,213.8 M979.6,213.8 Q967.0,185.7 950.8,159.4 M1031.0,231.8 Q1020.1,209.6 1002.3,192.5 M1002.3,192.5 Q999.1,185.1 995.7,177.8 M995.7,177.8 Q992.1,162.3 984.9,148.1 M984.9,148.1 Q985.7,136.2 984.5,124.3 M1031.0,231.8 Q1031.3,204.9 1042.4,180.4 M1042.4,180.4 Q1035.8,165.6 1025.8,152.9 M1031.0,231.8 Q1054.8,218.5 1077.4,203.2 M1077.4,203.2 Q1082.6,196.7 1088.9,191.3 M1088.9,191.3 Q1087.6,169.2 1095.9,148.7 M950.8,159.4 Q941.4,169.1 935.8,181.3 M935.8,181.3 Q935.5,193.4 935.0,205.5 M935.0,205.5 Q925.4,219.7 919.0,235.6 M950.8,159.4 Q932.7,147.5 911.5,142.8 M911.5,142.8 Q880.1,150.7 851.0,164.7 M1042.4,180.4 Q1072.3,169.9 1095.9,148.7 M950.8,159.4 Q959.6,161.9 968.1,165.3 M968.1,165.3 Q977.8,157.9 984.9,148.1 M979.6,213.8 Q967.9,221.3 955.8,228.2 M913.2,191.4 Q922.6,200.7 935.0,205.5 M1031.0,231.8 Q1057.0,245.1 1086.0,248.4 M1086.0,248.4 Q1092.3,252.9 1096.6,259.4 M950.8,159.4 Q940.8,141.3 937.6,120.8 M1025.8,152.9 Q1015.6,129.1 1012.2,103.4 M840.9,206.2 Q850.6,186.6 851.0,164.7 M876.0,289.0 Q924.2,280.6 972.9,275.2 M913.2,191.4 Q913.8,167.1 911.5,142.8 M979.6,213.8 Q985.9,195.0 995.7,177.8 M651.4,203.2 Q648.0,174.6 644.4,146.1 M651.4,203.2 Q681.6,188.1 713.2,176.4 M713.2,176.4 Q727.8,172.4 742.8,170.5 M644.4,146.1 Q675.1,133.5 704.6,118.5 M651.4,203.2 Q628.1,196.2 604.3,191.2 M604.3,191.2 Q601.4,182.5 595.4,175.5 M713.2,176.4 Q711.5,161.3 707.1,146.9 M707.1,146.9 Q708.8,132.4 704.6,118.5 M644.4,146.1 Q637.4,138.1 628.1,132.9 M595.4,175.5 Q623.3,166.6 644.4,146.1 M742.8,170.5 Q725.9,157.2 707.1,146.9 M1143.9,420.2 Q1149.8,355.2 1175.9,295.4 M1143.9,420.2 Q1118.9,394.9 1086.8,379.4 M1086.8,379.4 Q1051.4,381.1 1020.0,397.6 M1020.0,397.6 Q983.1,428.5 960.5,471.0 M960.5,471.0 Q936.3,456.8 911.2,444.1 M911.2,444.1 Q871.5,444.2 832.7,452.4 M832.7,452.4 Q843.3,464.5 850.2,479.0 M850.2,479.0 Q865.5,490.1 883.5,495.9 M883.5,495.9 Q897.2,499.5 911.2,502.0 M911.2,502.0 Q940.2,514.1 966.1,531.8 M1086.8,379.4 Q1063.9,382.4 1041.7,375.9 M1143.9,420.2 Q1121.9,430.9 1104.6,448.2 M1104.6,448.2 Q1071.7,456.5 1045.9,478.6 M1045.9,478.6 Q1023.4,480.8 1001.8,474.2 M1001.8,474.2 Q981.4,469.6 960.5,471.0 M1045.9,478.6 Q1029.3,497.2 1011.2,514.3 M1011.2,514.3 Q990.1,526.8 966.1,531.8 M1143.9,420.2 Q1137.0,453.9 1123.7,485.6 M1123.7,485.6 Q1093.6,499.2 1068.0,520.0 M1068.0,520.0 Q1055.3,545.7 1052.3,574.3 M1052.3,574.3 Q1054.9,605.7 1044.1,635.3 M1044.1,635.3 Q1025.8,660.7 1010.5,687.8 M1123.7,485.6 Q1132.3,507.8 1130.9,531.5 M1130.9,531.5 Q1107.8,575.5 1094.3,623.3 M1094.3,623.3 Q1102.2,644.7 1106.6,667.2 M1106.6,667.2 Q1100.3,689.5 1102.4,712.6 M1102.4,712.6 Q1096.3,739.4 1102.5,766.1 M1143.9,420.2 Q1182.1,406.4 1220.3,392.4 M1220.3,392.4 Q1250.2,403.1 1281.7,399.2 M1281.7,399.2 Q1299.9,398.9 1317.9,402.0 M1317.9,402.0 Q1357.6,413.6 1389.6,439.8 M1220.3,392.4 Q1236.8,375.2 1251.6,356.5 M1143.9,420.2 Q1187.4,430.7 1222.2,458.7 M1222.2,458.7 Q1247.4,461.6 1270.7,471.5 M1270.7,471.5 Q1269.7,498.2 1266.2,524.8 M1143.9,420.2 Q1169.6,457.9 1199.2,492.7 M1199.2,492.7 Q1235.3,503.2 1266.2,524.8 M1266.2,524.8 Q1265.9,543.9 1257.5,561.0 M1257.5,561.0 Q1254.3,576.5 1256.6,592.1 M1256.6,592.1 Q1258.4,610.0 1256.9,627.9 M1266.2,524.8 Q1288.0,532.5 1311.0,530.4 M1311.0,530.4 Q1344.1,518.9 1370.7,495.9 M1370.7,495.9 Q1370.6,484.7 1371.8,473.5 M1371.8,473.5 Q1380.4,456.5 1389.6,439.8 M1256.9,627.9 Q1257.9,654.8 1259.5,681.7 M1259.5,681.7 Q1255.3,712.9 1255.5,744.4 M1255.5,744.4 Q1267.4,765.6 1281.2,785.5 M1255.5,744.4 Q1245.3,747.7 1235.2,751.5 M1235.2,751.5 Q1223.8,758.0 1213.3,765.7 M1213.3,765.7 Q1190.6,774.9 1173.5,792.5 M1173.5,792.5 Q1171.0,807.6 1168.6,822.6 M1173.5,792.5 Q1137.6,780.5 1102.5,766.1 M1102.5,766.1 Q1085.8,745.4 1065.0,728.5 M1065.0,728.5 Q1035.2,711.6 1010.5,687.8 M1010.5,687.8 Q1015.2,717.8 1014.1,748.2 M1014.1,748.2 Q989.0,755.6 969.7,773.2 M1102.5,766.1 Q1071.4,777.6 1040.5,789.6 M1040.5,789.6 Q1030.3,787.4 1019.9,785.6 M1019.9,785.6 Q993.4,785.3 969.7,773.2 M1281.2,785.5 Q1294.2,790.5 1306.7,796.5 M1306.7,796.5 Q1337.7,779.2 1367.3,759.5 M1256.9,627.9 Q1281.4,641.9 1297.3,665.3 M1256.9,627.9 Q1281.2,635.8 1306.2,640.9 M1306.2,640.9 Q1311.6,630.3 1315.8,619.1 M1315.8,619.1 Q1314.0,609.0 1316.4,599.1 M1256.9,627.9 Q1287.5,615.3 1316.4,599.1 M1256.9,627.9 Q1246.9,638.6 1236.5,649.0 M1236.5,649.0 Q1207.8,635.4 1177.3,627.0 M1177.3,627.0 Q1181.0,600.6 1188.4,574.9 M1188.4,574.9 Q1185.9,560.6 1180.6,547.0 M1180.6,547.0 Q1163.7,542.0 1146.0,540.9 M1146.0,540.9 Q1137.4,538.0 1130.9,531.5 M1177.3,627.0 Q1188.5,681.0 1176.9,735.0 M1176.9,735.0 Q1193.8,751.9 1213.3,765.7 M966.1,531.8 Q967.5,568.9 984.4,602.0 M984.4,602.0 Q999.5,594.8 1015.9,591.4 M1015.9,591.4 Q1033.9,582.5 1052.3,574.3 M984.4,602.0 Q995.5,645.5 1010.5,687.8 M1317.9,402.0 Q1319.4,416.8 1318.3,431.6 M1318.3,431.6 Q1325.5,449.1 1330.4,467.4 M1318.3,431.6 Q1354.3,432.5 1389.6,439.8 M1143.9,420.2 Q1140.3,384.0 1141.3,347.7 M1141.3,347.7 Q1133.1,309.5 1121.4,272.2 M1175.9,295.4 Q1147.6,286.4 1121.4,272.2 M1175.9,295.4 Q1204.9,285.7 1234.9,279.5 M1068.0,520.0 Q1040.0,513.4 1011.2,514.3 M1052.3,574.3 Q1078.8,594.0 1094.3,623.3 M1177.3,627.0 Q1135.8,623.8 1094.3,623.3 M1146.0,540.9 Q1147.9,566.1 1155.3,590.1 M1155.3,590.1 Q1168.0,607.6 1177.3,627.0 M1154.0,719.0 Q1131.4,746.0 1102.5,766.1 M1106.6,667.2 Q1126.2,677.5 1147.9,681.9 M1147.9,681.9 Q1159.1,652.6 1177.3,627.0 M1176.9,735.0 Q1164.3,728.7 1154.0,719.0 M1236.5,649.0 Q1225.5,662.2 1213.6,674.6 M1213.6,674.6 Q1203.3,690.6 1196.1,708.2 M1196.1,708.2 Q1189.1,723.4 1176.9,735.0 M1297.3,665.3 Q1307.1,684.8 1313.5,705.6 M1313.5,705.6 Q1286.1,727.3 1255.5,744.4 M1010.5,687.8 Q1041.8,681.5 1069.6,665.8 M1069.6,665.8 Q1088.1,665.9 1106.6,667.2 M1020.0,397.6 Q994.2,377.1 963.1,366.3 M1020.0,397.6 Q1034.6,421.9 1040.9,449.6 M1040.9,449.6 Q1044.5,463.9 1045.9,478.6 M1143.9,420.2 Q1116.9,412.6 1089.2,408.9 M1089.2,408.9 Q1090.7,394.0 1086.8,379.4 M1143.9,420.2 Q1137.2,400.4 1131.5,380.3 M1131.5,380.3 Q1134.2,363.4 1141.3,347.7 M1143.9,420.2 Q1158.9,381.6 1186.6,350.8 M1186.6,350.8 Q1181.6,323.0 1175.9,295.4 M1257.5,561.0 Q1224.0,573.1 1188.4,574.9 M1199.2,492.7 Q1185.9,518.5 1180.6,547.0 M1318.3,431.6 Q1284.7,474.0 1266.2,524.8 M1330.4,467.4 Q1352.7,478.6 1370.7,495.9 M1234.9,279.5 Q1234.6,266.0 1237.2,252.8 M1237.2,252.8 Q1247.8,240.5 1254.4,225.7 M1254.4,225.7 Q1248.3,213.0 1240.6,201.2 M1240.6,201.2 Q1237.4,195.2 1232.5,190.4 M1232.5,190.4 Q1245.2,178.2 1259.6,168.1 M1240.6,201.2 Q1254.2,192.4 1269.9,188.8 M1269.9,188.8 Q1263.7,179.0 1259.6,168.1 M1237.2,252.8 Q1262.6,248.1 1285.8,236.6 M1285.8,236.6 Q1275.2,213.6 1269.9,188.8 M1234.9,279.5 Q1263.1,285.3 1290.2,295.1 M1290.2,295.1 Q1301.7,289.5 1313.7,284.8 M1234.9,279.5 Q1247.1,292.8 1258.3,307.0 M1258.3,307.0 Q1281.2,334.0 1301.7,362.8 M1301.7,362.8 Q1308.3,366.7 1315.8,367.7 M1234.9,279.5 Q1219.3,274.5 1206.2,264.8 M1206.2,264.8 Q1193.4,261.8 1183.4,253.4 M1206.2,264.8 Q1223.0,262.1 1237.2,252.8 M1206.2,264.8 Q1188.3,277.3 1175.9,295.4 M1269.9,188.8 Q1286.7,196.9 1305.3,196.7 M1259.6,168.1 Q1272.5,162.1 1285.8,156.9 M1285.8,156.9 Q1299.7,160.0 1313.7,157.1 M1313.7,157.1 Q1312.5,130.1 1300.8,105.6 M1313.7,157.1 Q1321.1,129.2 1335.7,104.2 M1285.8,236.6 Q1288.3,258.6 1295.8,279.4 M1295.8,279.4 Q1291.7,286.8 1290.2,295.1 M1315.8,367.7 Q1315.5,384.9 1317.9,402.0 M1315.8,367.7 Q1327.4,362.9 1338.9,357.9 M1234.9,279.5 Q1238.6,295.0 1239.1,311.0 M1239.1,311.0 Q1248.5,308.3 1258.3,307.0 M1305.3,196.7 Q1305.1,202.1 1303.5,207.4 M1303.5,207.4 Q1297.7,223.8 1285.8,236.6 M1305.3,196.7 Q1328.2,188.9 1350.4,179.3 M1305.3,196.7 Q1332.6,213.5 1355.9,235.6 M1313.7,284.8 Q1334.5,282.0 1353.6,273.1 M1353.6,273.1 Q1347.0,263.6 1345.1,252.2 M1345.1,252.2 Q1352.1,245.0 1355.9,235.6 M1355.9,235.6 Q1366.5,234.4 1376.6,231.3 M1376.6,231.3 Q1383.6,215.6 1383.9,198.4 M1383.9,198.4 Q1395.6,188.4 1402.9,174.8 M1402.9,174.8 Q1425.9,148.1 1437.4,114.8 M1376.6,231.3 Q1401.6,213.2 1425.1,193.3 M1425.1,193.3 Q1449.4,174.1 1479.7,167.7 M1353.6,273.1 Q1365.5,295.7 1382.4,314.9 M1382.4,314.9 Q1408.6,319.8 1431.9,332.4 M1431.9,332.4 Q1462.0,340.9 1489.8,354.9 M1489.8,354.9 Q1514.5,368.9 1540.9,378.8 M1540.9,378.8 Q1548.5,402.6 1556.5,426.2 M1556.5,426.2 Q1561.1,447.9 1563.9,469.8 M1431.9,332.4 Q1422.4,353.4 1422.1,376.4 M1422.1,376.4 Q1419.8,393.0 1419.3,409.8 M1419.3,409.8 Q1409.1,445.4 1393.7,479.1 M1393.7,479.1 Q1389.7,494.6 1382.2,508.8 M1422.1,376.4 Q1426.3,380.3 1431.5,382.6 M1419.3,409.8 Q1437.1,417.6 1454.7,425.8 M1454.7,425.8 Q1471.3,441.2 1491.4,451.6 M1491.4,451.6 Q1512.2,451.2 1532.8,453.7 M1532.8,453.7 Q1549.5,459.5 1563.9,469.8 M1563.9,469.8 Q1576.0,479.3 1588.4,488.5 M1588.4,488.5 Q1609.4,493.5 1631.0,492.0 M1540.9,378.8 Q1566.7,390.4 1587.6,409.4 M1587.6,409.4 Q1616.5,428.9 1649.7,439.7 M1431.9,332.4 Q1435.3,315.7 1431.9,298.9 M1431.9,298.9 Q1453.9,275.1 1468.3,246.0 M1468.3,246.0 Q1479.5,239.2 1488.1,229.3 M1488.1,229.3 Q1476.6,199.5 1479.7,167.7 M1468.3,246.0 Q1502.8,260.3 1538.8,270.3 M1538.8,270.3 Q1551.2,274.2 1564.3,273.7 M1564.3,273.7 Q1575.8,273.1 1586.6,277.3 M1586.6,277.3 Q1605.9,277.1 1624.9,281.1 M1624.9,281.1 Q1642.6,271.0 1662.0,265.0 M1538.8,270.3 Q1560.4,252.3 1581.6,233.8 M1581.6,233.8 Q1591.0,238.5 1600.0,244.0 M1600.0,244.0 Q1631.2,254.1 1662.0,265.0 M1540.9,378.8 Q1539.0,362.6 1533.0,347.4 M1533.0,347.4 Q1526.6,308.1 1538.8,270.3 M1540.9,378.8 Q1553.6,344.3 1579.2,318.0 M1579.2,318.0 Q1589.6,301.1 1605.2,288.9 M1605.2,288.9 Q1614.4,283.2 1624.9,281.1 M1600.0,244.0 Q1577.3,218.4 1566.6,185.9 M1566.6,185.9 Q1542.3,174.9 1515.6,175.5 M1515.6,175.5 Q1498.3,168.6 1479.7,167.7 M1355.3,393.6 Q1371.4,383.1 1390.4,379.6 M1390.4,379.6 Q1406.3,378.0 1422.1,376.4 M1355.3,393.6 Q1336.9,399.4 1317.9,402.0 M1338.9,357.9 Q1358.7,334.5 1382.4,314.9 M1662.0,265.0 Q1669.7,278.6 1675.4,293.1 M1675.4,293.1 Q1683.2,314.7 1693.9,334.9 M1540.9,378.8 Q1593.6,370.9 1645.4,358.7 M1645.4,358.7 Q1668.9,345.2 1693.9,334.9 M1646.9,156.9 Q1624.1,186.1 1593.9,207.4 M1593.9,207.4 Q1598.4,225.4 1600.0,244.0 M1646.9,156.9 Q1609.3,178.6 1566.6,185.9 M1479.7,167.7 Q1459.3,140.7 1437.4,114.8 M1376.6,231.3 Q1386.8,256.0 1401.8,278.1 M1401.8,278.1 Q1417.4,287.6 1431.9,298.9 M1431.9,332.4 Q1451.5,312.2 1477.4,301.1 M1477.4,301.1 Q1468.6,274.2 1468.3,246.0 M1454.7,425.8 Q1454.8,413.1 1456.4,400.6 M1456.4,400.6 Q1474.3,378.6 1489.8,354.9 M1491.4,451.6 Q1495.6,475.4 1506.0,497.3 M1563.9,469.8 Q1574.0,438.9 1587.6,409.4 M1454.6,502.0 Q1460.2,463.9 1454.7,425.8 M1338.9,357.9 Q1346.0,376.2 1355.3,393.6 M1353.6,273.1 Q1377.8,274.8 1401.8,278.1 M1662.0,265.0 Q1673.9,238.3 1689.0,213.2 M1646.9,156.9 Q1668.0,185.0 1689.0,213.2 M1382.2,508.8 Q1403.3,517.1 1425.5,521.1 M1425.5,521.1 Q1444.5,518.8 1463.6,517.9 M1463.6,517.9 Q1472.2,516.1 1480.4,512.6 M1382.2,508.8 Q1379.4,529.4 1375.7,549.8 M1375.7,549.8 Q1359.0,566.3 1338.7,578.2 M1338.7,578.2 Q1327.4,588.5 1316.4,599.1 M1375.7,549.8 Q1395.7,548.3 1415.0,543.0 M1415.0,543.0 Q1418.0,531.0 1425.5,521.1 M1415.0,543.0 Q1430.8,577.1 1444.2,612.2 M1444.2,612.2 Q1450.3,629.6 1455.1,647.4 M1338.7,578.2 Q1353.5,590.7 1371.8,597.2 M1425.5,521.1 Q1444.4,543.5 1470.6,556.4 M1375.7,549.8 Q1363.9,549.1 1352.2,547.0 M1352.2,547.0 Q1342.5,561.3 1338.7,578.2 M1480.4,512.6 Q1517.0,525.8 1555.8,528.4 M1555.8,528.4 Q1569.8,506.6 1588.4,488.5 M1631.0,492.0 Q1652.9,479.6 1675.3,468.1 M1675.3,468.1 Q1680.3,462.0 1687.0,458.1 M1631.0,492.0 Q1642.9,534.7 1667.0,572.0 M1667.0,572.0 Q1677.5,572.5 1688.0,571.4 M1688.0,571.4 Q1716.5,561.3 1739.5,541.6 M1555.8,528.4 Q1551.1,553.9 1553.6,579.7 M1553.6,579.7 Q1547.2,593.2 1543.0,607.6 M1543.0,607.6 Q1537.7,628.0 1537.1,649.1 M1687.0,458.1 Q1668.6,448.3 1649.7,439.7 M1667.0,572.0 Q1656.5,592.6 1639.2,607.8 M1688.0,571.4 Q1691.7,590.3 1697.0,608.8 M1695.6,412.0 Q1696.8,436.1 1687.0,458.1 M1693.9,334.9 Q1701.3,373.3 1695.6,412.0 M1693.9,334.9 Q1659.0,324.7 1622.6,323.8 M1622.6,323.8 Q1637.8,338.8 1645.4,358.7 M1693.9,334.9 Q1703.2,307.3 1722.2,285.3 M1693.9,334.9 Q1724.7,353.6 1746.3,382.4 M1693.9,334.9 Q1726.4,335.9 1757.2,325.3 M1506.0,497.3 Q1494.4,506.9 1480.4,512.6 M1386.6,672.9 Q1405.1,655.8 1429.1,648.3 M1429.1,648.3 Q1442.2,650.0 1455.1,647.4 M1455.1,647.4 Q1477.8,640.7 1501.5,642.4 M1501.5,642.4 Q1518.7,648.7 1537.1,649.1 M1537.1,649.1 Q1557.3,651.8 1577.8,651.1 M1577.8,651.1 Q1587.7,651.6 1597.3,648.9 M1597.3,648.9 Q1597.2,641.1 1593.9,634.0 M1593.9,634.0 Q1617.0,621.8 1639.2,607.8 M1639.2,607.8 Q1649.5,623.3 1663.8,635.3 M1455.1,647.4 Q1469.4,658.3 1477.8,674.2 M1477.8,674.2 Q1491.3,684.1 1506.9,690.2 M1506.9,690.2 Q1520.5,695.1 1534.2,699.9 M1534.2,699.9 Q1543.1,705.8 1553.0,709.8 M1553.0,709.8 Q1555.4,733.2 1549.1,755.7 M1549.1,755.7 Q1562.1,767.2 1577.5,775.2 M1577.5,775.2 Q1586.8,788.5 1600.6,797.0 M1577.5,775.2 Q1600.7,799.6 1612.1,831.2 M1612.1,831.2 Q1610.5,851.7 1605.5,871.6 M1605.5,871.6 Q1624.5,880.2 1643.9,887.7 M1643.9,887.7 Q1663.7,908.5 1689.0,922.2 M1689.0,922.2 Q1688.4,929.0 1686.2,935.4 M1553.0,709.8 Q1573.0,709.2 1592.2,714.7 M1553.0,709.8 Q1582.5,720.3 1608.7,737.4 M1608.7,737.4 Q1616.2,742.6 1624.4,746.9 M1624.4,746.9 Q1637.1,757.9 1652.1,765.4 M1652.1,765.4 Q1669.8,800.6 1683.8,837.3 M1386.6,672.9 Q1408.1,676.6 1428.9,683.0 M1428.9,683.0 Q1437.2,698.9 1444.0,715.5 M1444.0,715.5 Q1464.6,723.7 1483.9,734.8 M1483.9,734.8 Q1497.5,746.4 1510.2,759.1 M1510.2,759.1 Q1509.2,764.8 1506.0,769.7 M1455.1,647.4 Q1442.0,665.2 1428.9,683.0 M1386.6,672.9 Q1383.1,649.3 1369.7,629.6 M1537.1,649.1 Q1536.7,674.5 1534.2,699.9 M1549.1,755.7 Q1529.5,755.1 1510.2,759.1 M1605.5,871.6 Q1588.7,868.4 1573.7,859.9 M1573.7,859.9 Q1560.0,838.0 1542.6,818.9 M1542.6,818.9 Q1527.3,792.0 1506.0,769.7 M1506.9,690.2 Q1493.5,711.5 1483.9,734.8 M1577.8,651.1 Q1571.6,669.3 1565.7,687.7 M1565.7,687.7 Q1559.4,698.8 1553.0,709.8 M1663.8,635.3 Q1681.3,623.2 1697.0,608.8 M1605.5,871.6 Q1628.7,861.8 1646.7,844.2 M1646.7,844.2 Q1664.6,837.6 1683.8,837.3 M1549.1,755.7 Q1553.5,769.6 1552.5,784.1 M1552.5,784.1 Q1545.5,800.9 1542.6,818.9 M1600.6,797.0 Q1602.9,815.3 1612.1,831.2 M1386.6,672.9 Q1383.1,695.0 1380.0,717.1 M1380.0,717.1 Q1401.4,718.7 1422.8,721.6 M1422.8,721.6 Q1433.7,719.6 1444.0,715.5 M1422.8,721.6 Q1397.9,744.7 1367.3,759.5 M1455.1,647.4 Q1451.5,636.4 1450.5,624.9 M1450.5,624.9 Q1446.4,619.0 1444.2,612.2 M1593.9,634.0 Q1594.0,618.6 1593.0,603.3 M1663.8,635.3 Q1663.0,638.7 1661.7,641.8 M1661.7,641.8 Q1667.2,663.5 1667.1,685.8 M1697.0,608.8 Q1693.4,632.4 1694.1,656.3 M1605.5,871.6 Q1611.8,886.8 1623.9,898.0 M1683.8,837.3 Q1717.2,865.0 1744.5,898.6 M1686.2,935.4 Q1717.1,919.9 1744.5,898.6 M868.3,961.5 Q880.2,954.5 892.7,948.5 M892.7,948.5 Q931.1,932.7 962.1,905.1 M962.1,905.1 Q979.6,896.8 996.4,887.1 M996.4,887.1 Q1031.0,884.3 1065.3,889.3 M1065.3,889.3 Q1092.2,882.0 1120.1,882.2 M1120.1,882.2 Q1130.3,890.9 1135.7,903.2 M1065.3,889.3 Q1100.6,895.9 1135.7,903.2 M1135.7,903.2 Q1149.4,884.2 1165.2,867.0 M1165.2,867.0 Q1167.0,857.6 1171.5,849.1 M1171.5,849.1 Q1169.2,836.0 1168.6,822.6 M1135.7,903.2 Q1115.3,913.0 1093.5,919.3 M1093.5,919.3 Q1059.5,949.3 1034.5,987.1 M1034.5,987.1 Q1029.7,1003.7 1019.7,1017.7 M868.3,961.5 Q901.5,980.2 939.6,982.2 M939.6,982.2 Q979.8,999.5 1019.7,1017.7 M868.3,961.5 Q908.3,1005.6 952.3,1045.6 M868.3,961.5 Q868.0,923.7 868.9,885.8 M868.9,885.8 Q872.0,865.2 868.6,844.6 M868.6,844.6 Q894.3,832.6 915.2,813.5 M915.2,813.5 Q909.6,800.4 903.3,787.6 M903.3,787.6 Q924.9,785.6 946.7,784.1 M946.7,784.1 Q958.8,779.9 969.7,773.2 M903.3,787.6 Q884.4,777.9 863.4,775.1 M863.4,775.1 Q858.1,778.9 852.5,782.1 M852.5,782.1 Q811.6,777.2 770.6,781.4 M770.6,781.4 Q776.1,777.0 779.2,770.7 M770.6,781.4 Q777.4,805.0 783.5,828.8 M783.5,828.8 Q783.3,847.6 778.3,865.7 M778.3,865.7 Q801.4,873.6 821.8,886.9 M821.8,886.9 Q833.3,909.6 849.1,929.5 M849.1,929.5 Q857.4,946.3 868.3,961.5 M868.3,961.5 Q847.2,949.3 822.9,947.2 M822.9,947.2 Q802.6,934.0 779.1,928.3 M779.1,928.3 Q775.2,912.4 775.4,896.0 M775.4,896.0 Q774.6,880.6 778.3,865.7 M654.0,781.4 Q652.8,796.8 648.0,811.5 M648.0,811.5 Q646.9,831.9 640.0,851.0 M640.0,851.0 Q644.6,872.9 653.3,893.5 M654.0,781.4 Q671.6,795.6 693.0,803.2 M693.0,803.2 Q712.0,821.8 736.6,832.1 M736.6,832.1 Q759.8,827.7 783.5,828.8 M640.0,851.0 Q660.0,851.4 678.9,845.1 M678.9,845.1 Q707.2,836.0 736.6,832.1 M678.9,845.1 Q729.0,853.5 778.3,865.7 M996.4,887.1 Q1009.0,873.3 1018.3,857.1 M1018.3,857.1 Q1012.4,844.5 1011.8,830.6 M996.4,887.1 Q977.6,877.7 963.8,861.9 M963.8,861.9 Q966.6,838.6 961.9,815.6 M961.9,815.6 Q952.7,800.6 946.7,784.1 M925.3,837.1 Q897.2,842.8 868.6,844.6 M925.3,837.1 Q944.1,850.2 963.8,861.9 M996.4,887.1 Q988.1,926.0 986.5,965.7 M986.5,965.7 Q1009.3,987.8 1019.7,1017.7 M868.3,961.5 Q862.2,978.5 853.6,994.4 M868.3,961.5 Q843.1,975.9 817.0,988.7 M817.0,988.7 Q782.8,1019.7 748.1,1050.2 M748.1,1050.2 Q734.0,1053.3 719.6,1052.4 M746.8,1017.4 Q764.8,973.5 779.1,928.3 M746.8,1017.4 Q743.9,1033.9 748.1,1050.2 M868.3,961.5 Q865.4,1004.1 858.1,1046.2 M821.8,886.9 Q845.7,866.3 868.6,844.6 M821.8,886.9 Q824.3,875.2 830.8,865.1 M830.8,865.1 Q842.2,818.3 863.4,775.1 M924.0,880.0 Q905.6,913.0 892.7,948.5 M924.0,880.0 Q920.7,858.4 925.3,837.1 M915.2,813.5 Q938.4,818.9 961.9,815.6 M759.7,984.5 Q750.0,999.7 746.8,1017.4 M759.7,984.5 Q763.9,954.5 779.1,928.3 M1065.3,889.3 Q1045.2,868.2 1018.3,857.1 M1135.7,903.2 Q1118.8,869.7 1106.0,834.3 M693.0,803.2 Q733.2,797.4 770.6,781.4 M648.0,811.5 Q671.0,810.2 693.0,803.2 M915.2,813.5 Q921.4,824.8 925.3,837.1 M952.3,1045.6 Q987.2,1034.5 1019.7,1017.7 M775.4,896.0 Q798.9,893.2 821.8,886.9 M620.9,1061.5 Q633.4,1048.0 641.5,1031.5 M641.5,1031.5 Q637.1,1016.8 636.0,1001.5 M636.0,1001.5 Q646.7,989.0 654.1,974.2 M654.1,974.2 Q651.4,959.9 643.0,948.1 M643.0,948.1 Q644.8,932.5 644.1,916.9 M644.1,916.9 Q648.9,905.3 653.3,893.5 M644.1,916.9 Q663.4,908.9 684.3,908.3 M684.3,908.3 Q706.8,892.9 729.3,877.6 M643.0,948.1 Q659.8,946.3 676.7,946.9 M676.7,946.9 Q691.0,952.1 706.1,954.3 M706.1,954.3 Q743.7,944.4 779.1,928.3 M620.9,1061.5 Q648.8,1066.8 676.9,1070.3 M676.9,1070.3 Q696.9,1058.1 719.6,1052.4 M695.9,996.8 Q679.0,1006.4 663.6,1018.3 M663.6,1018.3 Q652.2,1024.2 641.5,1031.5 M706.1,954.3 Q704.3,976.3 695.9,996.8 M729.3,877.6 Q750.6,891.1 775.4,896.0 M698.7,1028.3 Q681.5,1022.0 663.6,1018.3 M698.7,1028.3 Q711.3,1038.4 719.6,1052.4 M676.7,946.9 Q684.5,928.4 684.3,908.3 M654.1,974.2 Q663.0,958.6 676.7,946.9 M695.9,996.8 Q727.3,988.1 759.7,984.5 M1466.9,822.6 Q1458.8,833.9 1453.2,846.7 M1453.2,846.7 Q1443.4,857.9 1434.6,870.0 M1466.9,822.6 Q1467.8,841.1 1469.6,859.6 M1469.6,859.6 Q1463.3,874.8 1459.2,890.7 M1459.2,890.7 Q1456.6,896.9 1453.7,902.9 M1434.6,870.0 Q1445.6,885.6 1453.7,902.9 M1435.5,830.6 Q1445.6,837.3 1453.2,846.7 M1426.4,942.7 Q1446.6,932.6 1469.2,931.3 M1426.4,942.7 Q1424.5,967.6 1427.8,992.3 M1427.8,992.3 Q1437.4,1013.8 1451.9,1032.4 M1469.2,931.3 Q1464.9,949.2 1461.4,967.3 M1461.4,967.3 Q1452.9,999.3 1451.9,1032.4 M1461.4,967.3 Q1445.4,980.9 1427.8,992.3" fill="none" stroke="#b3a8c8" stroke-width="1.15" opacity="0.8" mask="url(#lm)"/><path d="M1000.0,547.7 L1022.7,540.9 L1036.4,536.4 L1052.3,550.0 L1068.2,559.1 L1079.5,570.5 L1090.9,586.4 L1106.8,586.4 L1122.7,584.1 L1138.6,586.4 L1154.5,572.7 L1172.7,565.9 L1184.1,565.9 L1200.0,563.6 L1211.4,577.3 L1218.2,586.4 L1215.9,600.0 L1238.6,600.0 L1250.0,593.2 L1265.9,581.8 L1277.3,584.1 L1286.4,593.2 L1300.0,595.5 L1318.0,599.0" fill="none" stroke="#a48fa6" stroke-width="1.7" stroke-dasharray="5 1.5" stroke-linejoin="round" opacity="0.75"/><path d="M1072.7,450.0 L1077.3,468.2 L1068.2,500.0 L1056.8,518.2 L1059.1,538.6 L1052.3,550.0" fill="none" stroke="#a48fa6" stroke-width="1.7" stroke-dasharray="5 1.5" stroke-linejoin="round" opacity="0.75"/><path d="M1175.0,450.0 L1177.3,472.7 L1168.2,495.5 L1172.7,518.2 L1177.3,547.7 L1172.7,565.9" fill="none" stroke="#a48fa6" stroke-width="1.7" stroke-dasharray="5 1.5" stroke-linejoin="round" opacity="0.75"/><path d="M1175.0,475.0 L1195.5,477.3 L1215.9,484.1 L1231.8,479.5 L1250.0,477.3 L1261.4,490.9 L1272.7,504.5 L1300.0,502.3 L1337.0,536.0" fill="none" stroke="#a48fa6" stroke-width="1.7" stroke-dasharray="5 1.5" stroke-linejoin="round" opacity="0.75"/><path d="M1140.9,586.4 L1154.5,604.5 L1150.0,631.8 L1136.4,654.5 L1122.7,677.3 L1103.2,677.9" fill="none" stroke="#a48fa6" stroke-width="1.7" stroke-dasharray="5 1.5" stroke-linejoin="round" opacity="0.75"/><path d="M1085.0,707.5 L1103.2,677.9 L1135.0,680.2 L1135.0,700.6 L1150.9,700.6 L1160.0,684.7 L1171.4,698.4 L1182.7,682.5 L1198.6,687.0 L1212.3,698.4 L1219.1,716.5 L1230.5,723.4 L1244.1,723.4 L1255.5,721.1 L1264.5,718.9 L1278.2,725.7 L1285.0,714.3 L1289.5,702.9 L1303.2,687.0 L1326.4,673.4 L1323.6,684.7 L1339.5,671.1" fill="none" stroke="#a48fa6" stroke-width="1.7" stroke-dasharray="5 1.5" stroke-linejoin="round" opacity="0.75"/><path d="M1085.0,707.5 L1071.4,725.7 L1053.2,739.3 L1041.8,743.8 L1028.2,746.1 L1028.2,766.5 L1035.0,775.6 L1035.0,784.7 L1030.5,793.8 L1025.9,816.5" fill="none" stroke="#a48fa6" stroke-width="1.7" stroke-dasharray="5 1.5" stroke-linejoin="round" opacity="0.75"/><path d="M969.1,434.7 L975.9,443.8 L989.5,446.1 L989.5,475.6 L982.7,487.0 L971.4,491.5 L960.0,498.4 L939.5,507.5 L932.7,516.5 L923.6,512.0" fill="none" stroke="#a48fa6" stroke-width="1.7" stroke-dasharray="5 1.5" stroke-linejoin="round" opacity="0.75"/><path d="M989.5,446.1 L1007.7,446.1 L1028.2,443.8 L1035.0,452.9 L1053.2,455.2 L1071.4,464.3 L1080.5,466.6 L1100.0,460.0 L1110.0,440.0 L1108.0,420.0 L1115.0,405.0 L1120.0,380.0 L1112.0,350.0" fill="none" stroke="#a48fa6" stroke-width="1.7" stroke-dasharray="5 1.5" stroke-linejoin="round" opacity="0.75"/><path d="M935.0,527.9 L948.6,537.0 L971.4,539.3 L994.1,548.4 L1003.2,557.5 L1007.7,571.1 L1010.0,587.0 L998.6,589.3 L985.0,596.1" fill="none" stroke="#a48fa6" stroke-width="1.7" stroke-dasharray="5 1.5" stroke-linejoin="round" opacity="0.75"/><path d="M1048.6,505.2 L1039.5,521.1 L1044.1,539.3 L1052.3,550.0" fill="none" stroke="#a48fa6" stroke-width="1.7" stroke-dasharray="5 1.5" stroke-linejoin="round" opacity="0.75"/><path d="M705.5,774.0 L717.9,789.4 L714.8,820.3 L721.0,842.0 L708.6,857.4 L680.0,862.0" fill="none" stroke="#a48fa6" stroke-width="1.7" stroke-dasharray="5 1.5" stroke-linejoin="round" opacity="0.75"/><path d="M721.0,801.8 L739.5,808.0 L770.4,808.0 L801.3,801.8 L826.0,795.6 L841.5,801.8 L850.8,811.1 L863.1,808.0" fill="none" stroke="#a48fa6" stroke-width="1.7" stroke-dasharray="5 1.5" stroke-linejoin="round" opacity="0.75"/><path d="M863.1,808.0 L878.6,820.3 L894.0,832.7 L924.9,842.0 L940.4,857.4 L962.0,863.6" fill="none" stroke="#a48fa6" stroke-width="1.7" stroke-dasharray="5 1.5" stroke-linejoin="round" opacity="0.75"/><path d="M739.5,940.9 L770.4,950.1 L801.3,956.3 L832.2,962.5 L857.0,971.8 L878.6,968.7 L894.0,956.3 L912.6,937.8 L924.9,925.4 L943.5,919.2 L955.8,956.3" fill="none" stroke="#a48fa6" stroke-width="1.7" stroke-dasharray="5 1.5" stroke-linejoin="round" opacity="0.75"/><path d="M962.0,863.6 L952.7,888.3 L965.1,913.0 L949.6,931.6 L955.8,956.3 L974.4,974.9 L971.3,987.2" fill="none" stroke="#a48fa6" stroke-width="1.7" stroke-dasharray="5 1.5" stroke-linejoin="round" opacity="0.75"/><path d="M1030.0,801.8 L1023.8,832.7 L1030.0,863.6 L1042.4,894.5 L1048.6,925.4 L1054.8,950.1" fill="none" stroke="#a48fa6" stroke-width="1.7" stroke-dasharray="5 1.5" stroke-linejoin="round" opacity="0.75"/><path d="M724.1,1002.7 L754.9,993.4 L795.1,974.9 L832.2,981.0 L863.1,984.1" fill="none" stroke="#a48fa6" stroke-width="1.7" stroke-dasharray="5 1.5" stroke-linejoin="round" opacity="0.75"/><path d="M971.3,987.2 L955.8,1018.1 L971.3,1049.0 L986.7,1064.5" fill="none" stroke="#a48fa6" stroke-width="1.7" stroke-dasharray="5 1.5" stroke-linejoin="round" opacity="0.75"/><path d="M1380.5,312.0 L1394.1,302.9 L1400.9,284.7 L1391.8,266.5 L1403.2,248.4 L1425.9,239.3 L1441.8,227.9 L1462.3,223.4 L1464.5,207.5 L1457.7,193.8" fill="none" stroke="#a48fa6" stroke-width="1.7" stroke-dasharray="5 1.5" stroke-linejoin="round" opacity="0.75"/><path d="M1462.3,223.4 L1471.4,237.0 L1480.5,266.5 L1494.1,275.6 L1489.5,293.8 L1498.6,302.9 L1475.9,316.5 L1471.4,330.2 L1453.2,339.3 L1440.0,360.0 L1436.0,392.0" fill="none" stroke="#a48fa6" stroke-width="1.7" stroke-dasharray="5 1.5" stroke-linejoin="round" opacity="0.75"/><path d="M1498.6,302.9 L1516.8,300.6 L1539.5,316.5 L1553.2,309.7 L1571.4,305.2 L1585.0,312.0 L1620.0,306.0" fill="none" stroke="#a48fa6" stroke-width="1.7" stroke-dasharray="5 1.5" stroke-linejoin="round" opacity="0.75"/><path d="M1335.0,168.8 L1380.5,162.0 L1400.9,180.2 L1414.5,189.3 L1437.3,187.0 L1457.7,193.8 L1462.3,207.5" fill="none" stroke="#a48fa6" stroke-width="1.7" stroke-dasharray="5 1.5" stroke-linejoin="round" opacity="0.75"/><path d="M1425.9,652.9 L1430.5,666.5 L1441.8,675.6 L1457.7,684.7 L1462.3,698.4" fill="none" stroke="#a48fa6" stroke-width="1.7" stroke-dasharray="5 1.5" stroke-linejoin="round" opacity="0.75"/><path d="M1462.3,673.4 L1475.9,671.1 L1494.1,675.6 L1512.3,677.9 L1528.2,682.5 L1539.5,671.1 L1570.0,660.0 L1596.0,670.0" fill="none" stroke="#a48fa6" stroke-width="1.7" stroke-dasharray="5 1.5" stroke-linejoin="round" opacity="0.75"/><path d="M1475.9,718.9 L1494.1,725.6 L1516.8,730.2 L1539.5,734.7 L1557.7,727.9 L1569.1,734.7" fill="none" stroke="#a48fa6" stroke-width="1.7" stroke-dasharray="5 1.5" stroke-linejoin="round" opacity="0.75"/><path d="M1403.2,712.0 L1425.9,702.9 L1444.1,700.6 L1462.3,698.4" fill="none" stroke="#a48fa6" stroke-width="1.7" stroke-dasharray="5 1.5" stroke-linejoin="round" opacity="0.75"/><path d="M1380.8,490.0 L1340.0,470.0 L1320.0,440.0 L1290.0,420.0 L1260.0,400.0 L1230.0,370.0 L1215.0,340.0" fill="none" stroke="#a48fa6" stroke-width="1.7" stroke-dasharray="5 1.5" stroke-linejoin="round" opacity="0.75"/><path d="M585.0,250.6 L605.5,252.9 L630.5,246.1 L660.0,230.2 L705.5,202.9 L732.7,202.9 L764.5,193.8 L766.8,175.6 L764.5,166.5 L773.6,146.1 L778.2,112.0" fill="none" stroke="#5d6b6d" stroke-width="1" opacity="0.75"/><path d="M815.1,112.0 L816.4,114.5 L807.5,126.0 L802.4,141.3 L806.2,151.5 L817.6,156.5 L834.2,152.7 L836.7,161.6 L834.2,166.7 L803.2,177.9 L778.2,198.4 L773.6,218.8 L789.5,232.5 L791.8,248.4 L793.0,305.2 L766.8,316.5 L762.3,332.5 L744.1,327.9 L732.7,339.3 L735.0,362.0" fill="none" stroke="#5d6b6d" stroke-width="1" opacity="0.75"/><path d="M766.8,348.4 L785.0,352.9 L800.9,357.5 L819.1,343.8 L835.0,332.5 L853.2,337.0 L873.6,339.3 L885.0,332.5 L894.1,309.7 L905.5,305.2 L914.5,312.0 L925.9,318.8 L960.0,309.7 L980.5,314.3 L998.6,302.9 L1016.8,298.4 L1035.0,298.4 L1050.9,302.9 L1071.4,291.5 L1085.0,289.3 L1103.2,268.8 L1094.1,284.7" fill="none" stroke="#5d6b6d" stroke-width="1" opacity="0.75"/><path d="M1103.2,268.8 L1121.4,255.2 L1116.8,250.6 L1112.3,232.5 L1096.4,225.6 L1110.0,207.5 L1125.9,184.7 L1132.7,157.5 L1125.9,134.7 L1096.4,112.0" fill="none" stroke="#5d6b6d" stroke-width="1" opacity="0.75"/><path d="M1121.4,255.2 L1144.1,248.4 L1175.9,230.2 L1187.3,212.0 L1203.2,196.1 L1221.4,175.6 L1232.7,152.9 L1235.0,121.1 L1237.3,112.0" fill="none" stroke="#5d6b6d" stroke-width="1" opacity="0.75"/><path d="M1175.9,230.2 L1146.4,248.4 L1153.2,262.0" fill="none" stroke="#5d6b6d" stroke-width="1" opacity="0.75"/><path d="M1103.2,268.8 L1094.1,284.7 L1091.8,316.5 L1085.0,339.3 L1062.3,337.0 L1039.5,348.4 L1028.2,362.0 L1025.9,373.4 L998.6,371.1 L994.1,362.0 L991.8,357.5 L971.4,348.4 L944.1,346.1 L921.4,348.4 L916.8,362.0 L912.3,362.0 L903.2,373.4 L900.9,389.3 L894.1,400.6 L875.9,404.0 L835.0,417.7 L800.9,432.5 L789.5,446.1 L794.1,473.4 L800.9,487.0 L835.0,508.6 L869.1,516.5 L880.5,534.7 L903.2,541.5 L914.5,548.4 L914.5,566.5 L923.6,580.2 L944.1,589.3 L955.5,605.2 L960.0,612.0 L966.8,634.7 L971.4,648.4 L969.1,680.2 L965.7,709.7 L962.3,748.4 L955.5,768.8 L937.3,772.2 L925.9,768.8 L898.6,764.3 L873.6,760.9 L835.0,766.5 L803.2,759.7 L771.4,750.6 L748.6,755.2 L721.4,756.3 L687.3,742.7 L671.4,743.8 L653.2,755.2 L619.1,775.6 L603.2,793.8 L600.9,812.0 L607.7,832.5 L616.4,850.0 L620.5,875.1 L624.7,902.3 L624.7,954.5 L620.5,975.4 L605.9,996.3 L591.3,1011.0 L589.2,1027.7 L597.5,1075.0" fill="none" stroke="#5d6b6d" stroke-width="1" opacity="0.75"/><path d="M955.5,768.8 L956.6,782.5" fill="none" stroke="#5d6b6d" stroke-width="1" opacity="0.75"/><path d="M620.5,875.1 L633.1,875.1" fill="none" stroke="#5d6b6d" stroke-width="1" opacity="0.75"/><path d="M943.6,346.1 L943.6,362.0" fill="none" stroke="#5d6b6d" stroke-width="1" opacity="0.75"/><path d="M921.4,400.6 L921.4,416.5 L939.5,420.0 L948.6,412.0 L950.9,391.5" fill="none" stroke="#5d6b6d" stroke-width="1" opacity="0.75"/><path d="M1187.3,862.0 L1189.5,807.5 L1196.4,800.6 L1219.1,787.0 L1266.8,798.4 L1289.5,809.7 L1312.3,816.5 L1335.0,816.5 L1353.2,793.8 L1380.5,768.8 L1403.2,762.0 L1425.9,741.5 L1437.3,730.2 L1460.0,734.7 L1485.0,755.2 L1489.5,762.0 L1475.9,771.1 L1471.4,791.5 L1450.9,793.8 L1448.6,807.5 L1421.4,825.6 L1414.5,839.3 L1413.5,850.0 L1416.6,877.2 L1427.1,898.1 L1439.6,910.6" fill="none" stroke="#5d6b6d" stroke-width="1" opacity="0.75"/><path d="M1175.9,839.3 L1198.6,839.3 L1200.0,850.0 L1195.9,870.9 L1183.3,887.6 L1154.1,908.5 L1137.3,921.1 L1099.7,931.5 L1085.1,950.3 L1060.0,977.5" fill="none" stroke="#5d6b6d" stroke-width="1" opacity="0.75"/><path d="M1060.0,981.7 L1072.5,983.8 L1079.9,992.1 L1078.8,1000.5 L1068.4,1006.8 L1060.0,1004.7" fill="none" stroke="#5d6b6d" stroke-width="1" opacity="0.75"/><path d="M1139.4,999.5 L1154.1,988.0 L1181.2,977.5 L1195.9,985.9 L1206.3,973.3 L1225.1,970.2 L1239.8,979.6 L1246.0,996.3 L1241.9,1008.9" fill="none" stroke="#5d6b6d" stroke-width="1" opacity="0.75"/><path d="M1147.8,1034.0 L1168.7,1050.7 L1185.4,1044.4 L1193.8,1034.0" fill="none" stroke="#5d6b6d" stroke-width="1" opacity="0.75"/><path d="M1093.4,1075.0 L1076.7,1054.8 L1078.8,1038.1 L1089.3,1034.0 L1110.2,1034.0 L1120.6,1036.0 L1122.7,1059.0 L1116.4,1075.0" fill="none" stroke="#5d6b6d" stroke-width="1" opacity="0.75"/><path d="M1471.4,791.5 L1480.5,827.9 L1485.6,852.1 L1477.2,875.1 L1475.1,902.3 L1460.5,906.4 L1435.4,910.6 L1412.4,908.5 L1399.9,919.0 L1395.7,944.1 L1406.2,971.2 L1402.0,996.3 L1408.2,1006.8 L1399.9,1033.9 L1410.3,1063.2 L1435.4,1065.3 L1456.3,1056.9 L1481.4,1050.7 L1487.7,1038.1 L1491.9,975.4 L1496.0,954.5 L1491.9,933.6 L1477.2,902.3" fill="none" stroke="#5d6b6d" stroke-width="1" opacity="0.75"/><path d="M1485.6,852.1 L1529.5,859.4 L1560.0,870.9 L1588.4,883.5 L1611.3,929.3 L1653.8,955.4 L1723.0,991.4" fill="none" stroke="#5d6b6d" stroke-width="1" opacity="0.75"/><path d="M1680.4,1075.0 L1680.4,1064.7 L1689.0,1060.4 L1705.2,1059.4 L1714.8,1057.2 L1723.0,1046.5" fill="none" stroke="#5d6b6d" stroke-width="1" opacity="0.75"/><path d="M1621.4,652.7 L1637.3,648.2 L1648.6,643.6 L1666.8,639.1" fill="none" stroke="#5d6b6d" stroke-width="1" opacity="0.75"/><path d="M1621.4,652.7 L1619.1,684.5 L1610.0,707.3 L1612.3,730.0 L1605.0,760.0 L1611.0,720.0" fill="none" stroke="#5d6b6d" stroke-width="1" opacity="0.75"/><path d="M1639.5,650.5 L1646.4,680.0 L1662.3,707.3 L1687.3,730.0 L1710.0,760.0 L1723.0,790.0" fill="none" stroke="#5d6b6d" stroke-width="1" opacity="0.75"/><circle cx="1636.7" cy="1062" r="13" fill="none" stroke="#5d6b6d" stroke-width="1" opacity="0.75"/><path d="M1153.2,262.0 L1157.7,275.6 L1166.8,291.5 L1180.5,287.0 L1189.5,300.6 L1203.2,312.0 L1221.4,316.5 L1228.2,330.2 L1230.5,341.5 L1244.1,348.4 L1255.5,332.5 L1260.0,350.6 L1266.8,362.0 L1285.0,372.0 L1320.0,383.0 L1356.0,398.0 L1399.9,415.0 L1410.8,410.9" fill="none" stroke="#a6c6c4" stroke-width="3.6" stroke-linejoin="round" opacity="0.7"/><path d="M1153.2,262.0 L1157.7,275.6 L1166.8,291.5 L1180.5,287.0 L1189.5,300.6 L1203.2,312.0 L1221.4,316.5 L1228.2,330.2 L1230.5,341.5 L1244.1,348.4 L1255.5,332.5 L1260.0,350.6 L1266.8,362.0 L1285.0,372.0 L1320.0,383.0 L1356.0,398.0 L1399.9,415.0 L1410.8,410.9" fill="none" stroke="#58818a" stroke-width="1.4" stroke-linejoin="round"/><path d="M1189.5,246.1 L1203.2,252.9 L1216.8,255.2 L1230.5,243.8 L1244.1,237.0 L1262.3,234.7 L1273.6,243.8 L1285.0,248.4 L1294.1,255.2 L1303.2,262.0 L1298.6,275.6 L1310.0,289.3 L1323.6,312.0 L1332.7,316.5 L1316.0,340.0 L1300.0,352.0 L1266.8,362.0" fill="none" stroke="#a6c6c4" stroke-width="3.6" stroke-linejoin="round" opacity="0.7"/><path d="M1189.5,246.1 L1203.2,252.9 L1216.8,255.2 L1230.5,243.8 L1244.1,237.0 L1262.3,234.7 L1273.6,243.8 L1285.0,248.4 L1294.1,255.2 L1303.2,262.0 L1298.6,275.6 L1310.0,289.3 L1323.6,312.0 L1332.7,316.5 L1316.0,340.0 L1300.0,352.0 L1266.8,362.0" fill="none" stroke="#58818a" stroke-width="1.4" stroke-linejoin="round"/><path d="M1303.2,262.0 L1319.0,259.0 L1319.0,240.0 L1321.0,222.0 L1313.0,214.0 L1312.0,207.0 L1325.0,202.0 L1335.0,200.0 L1345.0,190.0 L1352.0,170.0 L1358.0,150.0 L1360.0,130.0 L1363.0,112.0" fill="none" stroke="#a6c6c4" stroke-width="3.6" stroke-linejoin="round" opacity="0.7"/><path d="M1303.2,262.0 L1319.0,259.0 L1319.0,240.0 L1321.0,222.0 L1313.0,214.0 L1312.0,207.0 L1325.0,202.0 L1335.0,200.0 L1345.0,190.0 L1352.0,170.0 L1358.0,150.0 L1360.0,130.0 L1363.0,112.0" fill="none" stroke="#58818a" stroke-width="1.4" stroke-linejoin="round"/><path d="M1410.8,410.9 L1399.9,427.3 L1389.0,449.1 L1383.6,470.9 L1380.8,490.0 L1378.1,506.3 L1372.7,509.1 L1359.0,498.2 L1356.3,509.1 L1337.2,536.3 L1329.0,555.4 L1318.1,566.3 L1312.7,588.1 L1318.1,599.0 L1307.2,607.2 L1330.0,600.0 L1345.4,588.1" fill="none" stroke="#a6c6c4" stroke-width="3.6" stroke-linejoin="round" opacity="0.7"/><path d="M1410.8,410.9 L1399.9,427.3 L1389.0,449.1 L1383.6,470.9 L1380.8,490.0 L1378.1,506.3 L1372.7,509.1 L1359.0,498.2 L1356.3,509.1 L1337.2,536.3 L1329.0,555.4 L1318.1,566.3 L1312.7,588.1 L1318.1,599.0 L1307.2,607.2 L1330.0,600.0 L1345.4,588.1" fill="none" stroke="#58818a" stroke-width="1.4" stroke-linejoin="round"/><path d="M1372.7,509.1 L1399.9,503.6 L1427.2,500.9 L1454.5,498.2 L1481.7,506.3 L1488.6,510.9 L1500.0,526.8 L1504.5,529.1 L1511.4,510.9 L1527.3,513.2 L1560.0,509.5 L1591.8,505.0 L1594.1,500.5 L1612.3,502.7 L1625.9,509.5 L1630.5,514.1 L1632.7,498.2 L1625.9,480.0 L1640.0,468.0 L1660.0,455.0 L1690.0,440.0 L1723.0,430.0" fill="none" stroke="#a6c6c4" stroke-width="3.6" stroke-linejoin="round" opacity="0.7"/><path d="M1372.7,509.1 L1399.9,503.6 L1427.2,500.9 L1454.5,498.2 L1481.7,506.3 L1488.6,510.9 L1500.0,526.8 L1504.5,529.1 L1511.4,510.9 L1527.3,513.2 L1560.0,509.5 L1591.8,505.0 L1594.1,500.5 L1612.3,502.7 L1625.9,509.5 L1630.5,514.1 L1632.7,498.2 L1625.9,480.0 L1640.0,468.0 L1660.0,455.0 L1690.0,440.0 L1723.0,430.0" fill="none" stroke="#58818a" stroke-width="1.4" stroke-linejoin="round"/><path d="M1345.4,588.1 L1350.0,606.4 L1359.1,622.3 L1377.3,617.7 L1395.5,617.7 L1409.1,601.8 L1418.2,583.6 L1431.8,592.7 L1438.6,610.9 L1447.7,622.3 L1456.8,601.8 L1459.1,581.4 L1468.2,583.6 L1497.7,599.5 L1495.5,592.7 L1497.7,576.8 L1511.4,572.3 L1513.6,554.1 L1500.0,556.4 L1481.8,545.0 L1504.5,529.1" fill="none" stroke="#a6c6c4" stroke-width="3.6" stroke-linejoin="round" opacity="0.7"/><path d="M1345.4,588.1 L1350.0,606.4 L1359.1,622.3 L1377.3,617.7 L1395.5,617.7 L1409.1,601.8 L1418.2,583.6 L1431.8,592.7 L1438.6,610.9 L1447.7,622.3 L1456.8,601.8 L1459.1,581.4 L1468.2,583.6 L1497.7,599.5 L1495.5,592.7 L1497.7,576.8 L1511.4,572.3 L1513.6,554.1 L1500.0,556.4 L1481.8,545.0 L1504.5,529.1" fill="none" stroke="#58818a" stroke-width="1.4" stroke-linejoin="round"/><path d="M1513.6,554.1 L1518.2,560.9 L1538.6,560.9 L1550.0,549.5 L1560.0,545.9 L1589.5,543.6 L1589.5,552.7 L1598.6,564.1 L1612.3,570.9 L1628.2,575.5 L1660.0,580.0 L1673.6,582.3 L1687.3,584.5 L1700.9,586.8 L1707.7,580.0 L1722.5,570.9" fill="none" stroke="#a6c6c4" stroke-width="3.6" stroke-linejoin="round" opacity="0.7"/><path d="M1513.6,554.1 L1518.2,560.9 L1538.6,560.9 L1550.0,549.5 L1560.0,545.9 L1589.5,543.6 L1589.5,552.7 L1598.6,564.1 L1612.3,570.9 L1628.2,575.5 L1660.0,580.0 L1673.6,582.3 L1687.3,584.5 L1700.9,586.8 L1707.7,580.0 L1722.5,570.9" fill="none" stroke="#58818a" stroke-width="1.4" stroke-linejoin="round"/><path d="M1660.0,580.0 L1646.4,593.6 L1657.7,602.7 L1650.9,611.8 L1655.5,623.2 L1666.8,639.1 L1655.5,643.6 L1669.1,650.5 L1687.3,645.9 L1700.9,636.8 L1719.1,648.2 L1723.0,648.2" fill="none" stroke="#a6c6c4" stroke-width="3.6" stroke-linejoin="round" opacity="0.7"/><path d="M1660.0,580.0 L1646.4,593.6 L1657.7,602.7 L1650.9,611.8 L1655.5,623.2 L1666.8,639.1 L1655.5,643.6 L1669.1,650.5 L1687.3,645.9 L1700.9,636.8 L1719.1,648.2 L1723.0,648.2" fill="none" stroke="#58818a" stroke-width="1.4" stroke-linejoin="round"/><path d="M1345.4,588.1 L1353.6,637.2 L1362.3,652.9 L1360.0,664.3 L1339.5,671.1 L1341.8,680.2 L1357.7,689.3 L1353.2,707.5 L1355.5,723.4 L1369.1,730.2 L1385.0,732.5 L1387.3,743.8 L1380.5,750.6 L1378.2,762.0" fill="none" stroke="#a6c6c4" stroke-width="3.6" stroke-linejoin="round" opacity="0.7"/><path d="M1345.4,588.1 L1353.6,637.2 L1362.3,652.9 L1360.0,664.3 L1339.5,671.1 L1341.8,680.2 L1357.7,689.3 L1353.2,707.5 L1355.5,723.4 L1369.1,730.2 L1385.0,732.5 L1387.3,743.8 L1380.5,750.6 L1378.2,762.0" fill="none" stroke="#58818a" stroke-width="1.4" stroke-linejoin="round"/><path d="M955.5,782.5 L971.4,793.8 L975.9,800.6 L994.1,805.2 L1012.3,812.0 L1035.0,821.1 L1066.8,823.4 L1069.1,814.3 L1085.0,816.5 L1098.6,823.4 L1114.5,827.9 L1130.5,841.5 L1153.2,843.8 L1171.4,837.0 L1180.5,839.3" fill="none" stroke="#a6c6c4" stroke-width="3.6" stroke-linejoin="round" opacity="0.7"/><path d="M955.5,782.5 L971.4,793.8 L975.9,800.6 L994.1,805.2 L1012.3,812.0 L1035.0,821.1 L1066.8,823.4 L1069.1,814.3 L1085.0,816.5 L1098.6,823.4 L1114.5,827.9 L1130.5,841.5 L1153.2,843.8 L1171.4,837.0 L1180.5,839.3" fill="none" stroke="#58818a" stroke-width="1.4" stroke-linejoin="round"/><path d="M633.1,875.1 L647.7,860.5 L664.4,858.4 L664.4,875.1 L679.1,873.0 L700.0,877.2 L714.6,866.7 L737.6,870.9 L739.7,885.5 L754.3,891.8 L748.0,904.3 L735.5,912.7 L723.0,925.3 L727.1,950.3 L725.0,967.1 L718.8,975.4 L723.0,988.0 L716.7,1006.8 L695.8,1006.8 L704.1,1027.7 L714.6,1042.3 L718.8,1050.7 L710.4,1061.1 L706.2,1075.0" fill="none" stroke="#a6c6c4" stroke-width="3.6" stroke-linejoin="round" opacity="0.7"/><path d="M633.1,875.1 L647.7,860.5 L664.4,858.4 L664.4,875.1 L679.1,873.0 L700.0,877.2 L714.6,866.7 L737.6,870.9 L739.7,885.5 L754.3,891.8 L748.0,904.3 L735.5,912.7 L723.0,925.3 L727.1,950.3 L725.0,967.1 L718.8,975.4 L723.0,988.0 L716.7,1006.8 L695.8,1006.8 L704.1,1027.7 L714.6,1042.3 L718.8,1050.7 L710.4,1061.1 L706.2,1075.0" fill="none" stroke="#58818a" stroke-width="1.4" stroke-linejoin="round"/><path d="M1691.2,112.0 L1679.8,125.6 L1693.5,146.1 L1707.1,180.2 L1704.8,212.0 L1713.9,234.7 L1720.7,252.9 L1713.9,275.6 L1700.3,275.6 L1686.6,266.5 L1670.7,284.7 L1648.0,293.8 L1618.5,307.5 L1591.2,318.8 L1595.7,330.2 L1607.1,343.8 L1602.5,362.0 L1620.0,380.0 L1650.0,400.0 L1680.0,420.0 L1700.0,425.0 L1723.0,430.0" fill="none" stroke="#a6c6c4" stroke-width="3.6" stroke-linejoin="round" opacity="0.7"/><path d="M1691.2,112.0 L1679.8,125.6 L1693.5,146.1 L1707.1,180.2 L1704.8,212.0 L1713.9,234.7 L1720.7,252.9 L1713.9,275.6 L1700.3,275.6 L1686.6,266.5 L1670.7,284.7 L1648.0,293.8 L1618.5,307.5 L1591.2,318.8 L1595.7,330.2 L1607.1,343.8 L1602.5,362.0 L1620.0,380.0 L1650.0,400.0 L1680.0,420.0 L1700.0,425.0 L1723.0,430.0" fill="none" stroke="#58818a" stroke-width="1.4" stroke-linejoin="round"/><path transform="translate(1031,233.6) scale(0.45)" d="M0,-9 L2.6,-3.2 L8.6,-2.8 L4,1.2 L5.4,7.2 L0,4 L-5.4,7.2 L-4,1.2 L-8.6,-2.8 L-2.6,-3.2Z" fill="#4a4a4a"/><path transform="translate(1143.6,421.8) scale(0.45)" d="M0,-9 L2.6,-3.2 L8.6,-2.8 L4,1.2 L5.4,7.2 L0,4 L-5.4,7.2 L-4,1.2 L-8.6,-2.8 L-2.6,-3.2Z" fill="#4a4a4a"/><path transform="translate(867.4,962.9) scale(0.45)" d="M0,-9 L2.6,-3.2 L8.6,-2.8 L4,1.2 L5.4,7.2 L0,4 L-5.4,7.2 L-4,1.2 L-8.6,-2.8 L-2.6,-3.2Z" fill="#4a4a4a"/><path transform="translate(1692.8,335.9) scale(0.45)" d="M0,-9 L2.6,-3.2 L8.6,-2.8 L4,1.2 L5.4,7.2 L0,4 L-5.4,7.2 L-4,1.2 L-8.6,-2.8 L-2.6,-3.2Z" fill="#4a4a4a"/><path transform="translate(621,1062) scale(0.45)" d="M0,-9 L2.6,-3.2 L8.6,-2.8 L4,1.2 L5.4,7.2 L0,4 L-5.4,7.2 L-4,1.2 L-8.6,-2.8 L-2.6,-3.2Z" fill="#4a4a4a"/><text x="959.5" y="160.9" textLength="39.6" lengthAdjust="spacingAndGlyphs" class="rl">England</text><text x="847.5" y="172.2" textLength="38.6" lengthAdjust="spacingAndGlyphs" class="rl">Cymru /</text><text x="852.7" y="185.2" textLength="28.9" lengthAdjust="spacingAndGlyphs" class="rl">Wales</text><text x="1220.2" y="147.2" textLength="72.1" lengthAdjust="spacingAndGlyphs" class="rl">Noord-Holland</text><text x="1260" y="167.2" textLength="47.3" lengthAdjust="spacingAndGlyphs" class="rl">Flevoland</text><text x="1254.3" y="197.2" textLength="37.5" lengthAdjust="spacingAndGlyphs" class="rl">Utrecht</text><text x="1247.5" y="230.2" textLength="73.9" lengthAdjust="spacingAndGlyphs" class="rl">Noord-Brabant</text><text x="1185" y="243.4" textLength="39.8" lengthAdjust="spacingAndGlyphs" class="rl">Zeeland</text><text x="1285" y="259.3" textLength="41.4" lengthAdjust="spacingAndGlyphs" class="rl">Limburg</text><text x="1282.3" y="118.4" textLength="35.7" lengthAdjust="spacingAndGlyphs" class="rl">Fryslân</text><text x="1137.7" y="331.3" textLength="47.3" lengthAdjust="spacingAndGlyphs" class="rl">Hauts-de-</text><text x="1144.5" y="345" textLength="32.5" lengthAdjust="spacingAndGlyphs" class="rl">France</text><text x="1413.4" y="121.1" textLength="38.0" lengthAdjust="spacingAndGlyphs" class="rl">Bremen</text><text x="1354.3" y="232.5" textLength="53.4" lengthAdjust="spacingAndGlyphs" class="rl">Nordrhein-</text><text x="1356.6" y="245.6" textLength="48.9" lengthAdjust="spacingAndGlyphs" class="rl">Westfalen</text><text x="1514.5" y="280.6" textLength="50.5" lengthAdjust="spacingAndGlyphs" class="rl">Thüringen</text><text x="1430.5" y="301.8" textLength="35.2" lengthAdjust="spacingAndGlyphs" class="rl">Hessen</text><text x="1629.4" y="279" textLength="40.2" lengthAdjust="spacingAndGlyphs" class="rl">Sachsen</text><text x="1321" y="132" textLength="38.5" lengthAdjust="spacingAndGlyphs" class="rl">Drenthe</text><text x="1023.6" y="410.4" textLength="55.7" lengthAdjust="spacingAndGlyphs" class="rl">Normandie</text><text x="881.6" y="465.4" textLength="45.4" lengthAdjust="spacingAndGlyphs" class="rl">Bretagne</text><text x="981.6" y="500.2" textLength="37.0" lengthAdjust="spacingAndGlyphs" class="rl">Pays de</text><text x="981.6" y="513.1" textLength="36.4" lengthAdjust="spacingAndGlyphs" class="rl">la Loire</text><text x="914.7" y="365.5" textLength="45.0" lengthAdjust="spacingAndGlyphs" class="rl">Alderney</text><text x="1090.5" y="508" textLength="50.9" lengthAdjust="spacingAndGlyphs" class="rl">Centre-Val</text><text x="1095.5" y="520.9" textLength="40.2" lengthAdjust="spacingAndGlyphs" class="rl">de Loire</text><text x="1239" y="534.5" textLength="55.3" lengthAdjust="spacingAndGlyphs" class="rl">Bourgogne-</text><text x="1246.6" y="547.7" textLength="40.9" lengthAdjust="spacingAndGlyphs" class="rl">Franche-</text><text x="1251.8" y="560.9" textLength="32.3" lengthAdjust="spacingAndGlyphs" class="rl">Comté</text><text x="1030.7" y="648.9" textLength="46.6" lengthAdjust="spacingAndGlyphs" class="rl">Nouvelle-</text><text x="1030" y="662.5" textLength="48.4" lengthAdjust="spacingAndGlyphs" class="rl">Aquitaine</text><text x="1225" y="655.7" textLength="47.7" lengthAdjust="spacingAndGlyphs" class="rl">Auvergne-</text><text x="1219.3" y="669.3" textLength="60.2" lengthAdjust="spacingAndGlyphs" class="rl">Rhône-Alpes</text><text x="1130" y="440.4" textLength="64.0" lengthAdjust="spacingAndGlyphs" class="rl">Île-de-France</text><text x="1291.4" y="450.4" textLength="47.2" lengthAdjust="spacingAndGlyphs" class="rl">Grand Est</text><text x="1332" y="388" textLength="43.0" lengthAdjust="spacingAndGlyphs" class="rl">Saarland</text><text x="1511" y="420" textLength="34.0" lengthAdjust="spacingAndGlyphs" class="rl">Bayern</text><text x="1397.2" y="446.9" textLength="100.8" lengthAdjust="spacingAndGlyphs" class="rl">Baden-Württemberg</text><text x="1638" y="468" textLength="74.0" lengthAdjust="spacingAndGlyphs" class="rl">Oberösterreich</text><text x="1396.6" y="504.1" textLength="66.6" lengthAdjust="spacingAndGlyphs" class="rl">Schaffhausen</text><text x="1343.6" y="516.6" textLength="84.1" lengthAdjust="spacingAndGlyphs" class="rl">Basel-Landschaft</text><text x="1352.7" y="528" textLength="20.0" lengthAdjust="spacingAndGlyphs" class="rl">Jura</text><text x="1439.8" y="517.7" textLength="48.4" lengthAdjust="spacingAndGlyphs" class="rl">Appenzell</text><text x="1429.5" y="530.9" textLength="68.2" lengthAdjust="spacingAndGlyphs" class="rl">Ausserrhoden</text><text x="1392.7" y="545" textLength="32.3" lengthAdjust="spacingAndGlyphs" class="rl">Luzern</text><text x="1321.6" y="575" textLength="25.0" lengthAdjust="spacingAndGlyphs" class="rl">Vaud</text><text x="1300" y="602.3" textLength="35.0" lengthAdjust="spacingAndGlyphs" class="rl">Genève</text><text x="1354.5" y="601.8" textLength="62.5" lengthAdjust="spacingAndGlyphs" class="rl">Valais/Wallis</text><text x="1421.6" y="594.5" textLength="28.4" lengthAdjust="spacingAndGlyphs" class="rl">Ticino</text><text x="1342" y="634.1" textLength="62.5" lengthAdjust="spacingAndGlyphs" class="rl">Valle d'Aosta</text><text x="1455.7" y="645" textLength="52.3" lengthAdjust="spacingAndGlyphs" class="rl">Lombardia</text><text x="1374.5" y="678" textLength="46.4" lengthAdjust="spacingAndGlyphs" class="rl">Piemonte</text><text x="1415.9" y="715.5" textLength="34.1" lengthAdjust="spacingAndGlyphs" class="rl">Liguria</text><text x="1499" y="712.5" textLength="80.3" lengthAdjust="spacingAndGlyphs" class="rl">Emilia-Romagna</text><text x="1524.8" y="779.7" textLength="38.6" lengthAdjust="spacingAndGlyphs" class="rl">Toscana</text><text x="1560" y="639.1" textLength="34.0" lengthAdjust="spacingAndGlyphs" class="rl">Veneto</text><text x="1597.5" y="600" textLength="67.0" lengthAdjust="spacingAndGlyphs" class="rl">Friuli Venezia</text><text x="1616.8" y="613.6" textLength="29.1" lengthAdjust="spacingAndGlyphs" class="rl">Giulia</text><text x="1618.6" y="523.2" textLength="42.5" lengthAdjust="spacingAndGlyphs" class="rl">Salzburg</text><text x="1646.4" y="567.5" textLength="40.4" lengthAdjust="spacingAndGlyphs" class="rl">Kärnten</text><text x="1699.8" y="534.1" textLength="60.2" lengthAdjust="spacingAndGlyphs" class="rl">Steiermark</text><text x="1545" y="535.7" textLength="28.6" lengthAdjust="spacingAndGlyphs" class="rl">Tirol</text><text x="1528" y="574.1" textLength="45.6" lengthAdjust="spacingAndGlyphs" class="rl">Trentino-</text><text x="1522.7" y="587.7" textLength="50.9" lengthAdjust="spacingAndGlyphs" class="rl">Alto Adige/</text><text x="1530.7" y="601.4" textLength="42.9" lengthAdjust="spacingAndGlyphs" class="rl">Südtirol</text><text x="1617.2" y="787" textLength="36.0" lengthAdjust="spacingAndGlyphs" class="rl">Marche</text><text x="1587.7" y="810.9" textLength="36.0" lengthAdjust="spacingAndGlyphs" class="rl">Umbria</text><text x="1647.9" y="856.7" textLength="39.3" lengthAdjust="spacingAndGlyphs" class="rl">Abruzzo</text><text x="1685.8" y="889.4" textLength="30.8" lengthAdjust="spacingAndGlyphs" class="rl">Molise</text><text x="1688.1" y="939.7" textLength="49.9" lengthAdjust="spacingAndGlyphs" class="rl">Campania</text><text x="1289.5" y="728.4" textLength="47.5" lengthAdjust="spacingAndGlyphs" class="rl">Provence-</text><text x="1286.8" y="742" textLength="58.2" lengthAdjust="spacingAndGlyphs" class="rl">Alpes-Côte</text><text x="1297.5" y="754.7" textLength="30.7" lengthAdjust="spacingAndGlyphs" class="rl">d'Azur</text><text x="1120.9" y="768.4" textLength="46.4" lengthAdjust="spacingAndGlyphs" class="rl">Occitanie</text><text x="740.7" y="782.9" textLength="52.3" lengthAdjust="spacingAndGlyphs" class="rl">Principado</text><text x="739.1" y="796.1" textLength="55.4" lengthAdjust="spacingAndGlyphs" class="rl">de Asturias</text><text x="662.7" y="832.5" textLength="33.0" lengthAdjust="spacingAndGlyphs" class="rl">Galicia</text><text x="826" y="798.4" textLength="50.0" lengthAdjust="spacingAndGlyphs" class="rl">Cantabria</text><text x="902" y="809.3" textLength="37.5" lengthAdjust="spacingAndGlyphs" class="rl">Euskadi</text><text x="905.5" y="851.1" textLength="38.1" lengthAdjust="spacingAndGlyphs" class="rl">La Rioja</text><text x="798.6" y="875.5" textLength="51.4" lengthAdjust="spacingAndGlyphs" class="rl">Castilla y</text><text x="809" y="888.7" textLength="23.7" lengthAdjust="spacingAndGlyphs" class="rl">León</text><text x="724.6" y="1039.2" textLength="64.8" lengthAdjust="spacingAndGlyphs" class="rl">Extremadura</text><text x="984.5" y="908.5" textLength="35.5" lengthAdjust="spacingAndGlyphs" class="rl">Aragón</text><text x="975.5" y="1003.6" textLength="52.9" lengthAdjust="spacingAndGlyphs" class="rl">Comunitat</text><text x="975" y="1016.8" textLength="54.4" lengthAdjust="spacingAndGlyphs" class="rl">Valenciana</text><text x="897.7" y="1018.9" textLength="38.7" lengthAdjust="spacingAndGlyphs" class="rl">Castilla-</text><text x="891" y="1032.3" textLength="53.1" lengthAdjust="spacingAndGlyphs" class="rl">La Mancha</text><text x="1083.4" y="879.3" textLength="50.2" lengthAdjust="spacingAndGlyphs" class="rl">Catalunya</text><text x="1423.9" y="978.6" textLength="48.1" lengthAdjust="spacingAndGlyphs" class="rl">Sardigna/</text><text x="1424.5" y="992.1" textLength="46.5" lengthAdjust="spacingAndGlyphs" class="rl">Sardegna</text><text x="1552.7" y="206.3" textLength="37.3" lengthAdjust="spacingAndGlyphs" class="rl">Anhalt</text><text x="650.6" y="136.8" textLength="45.5" lengthAdjust="spacingAndGlyphs" class="bl" font-size="11.5">Ireland</text><text x="1260" y="184" textLength="67.0" lengthAdjust="spacingAndGlyphs" class="bl" font-size="13.5">Nederland</text><text x="1196" y="291.5" textLength="107.0" lengthAdjust="spacingAndGlyphs" class="bl" font-size="13.5">België - Belgique</text><text x="1221.4" y="310.9" textLength="55.6" lengthAdjust="spacingAndGlyphs" class="bl" font-size="13.5">- Belgien</text><text x="1283" y="359" textLength="66.0" lengthAdjust="spacingAndGlyphs" class="bl" font-size="11.5">Lëtzebuerg</text><text x="1472.5" y="263.1" textLength="80.2" lengthAdjust="spacingAndGlyphs" class="bl" font-size="13.5">Deutschland</text><text x="889.5" y="385.2" textLength="60.3" lengthAdjust="spacingAndGlyphs" class="bl" font-size="11.5">Guernsey</text><text x="920.2" y="402.9" textLength="38.7" lengthAdjust="spacingAndGlyphs" class="bl" font-size="11.5">Jersey</text><text x="1035.9" y="229.7" textLength="40.0" lengthAdjust="spacingAndGlyphs" class="bl" font-size="11.5">London</text><text x="1148.5" y="418.5" textLength="26.5" lengthAdjust="spacingAndGlyphs" class="bl" font-size="11.5">Paris</text><text x="1101.6" y="578.6" textLength="42.3" lengthAdjust="spacingAndGlyphs" class="bl" font-size="13.5">France</text><text x="1428.4" y="542.3" textLength="86.4" lengthAdjust="spacingAndGlyphs" class="bl" font-size="13.5">Liechtenstein</text><text x="1360.9" y="556.4" textLength="101.6" lengthAdjust="spacingAndGlyphs" class="bl" font-size="13.5">Schweiz/Suisse/</text><text x="1363.6" y="575.9" textLength="95.5" lengthAdjust="spacingAndGlyphs" class="bl" font-size="13.5">Svizzera/Svizra</text><text x="1646.4" y="514.1" textLength="67.0" lengthAdjust="spacingAndGlyphs" class="bl" font-size="13.5">Österreich</text><text x="1682.7" y="611.8" textLength="62.3" lengthAdjust="spacingAndGlyphs" class="bl" font-size="13.5">Slovenija</text><text x="1350.5" y="763.8" textLength="50.0" lengthAdjust="spacingAndGlyphs" class="bl" font-size="11.5">Monaco</text><text x="1082" y="838.1" textLength="52.5" lengthAdjust="spacingAndGlyphs" class="bl" font-size="11.5">Andorra</text><text x="1567.1" y="751.1" textLength="73.6" lengthAdjust="spacingAndGlyphs" class="bl" font-size="11.5">San Marino</text><text x="1596.6" y="831.8" textLength="34.3" lengthAdjust="spacingAndGlyphs" class="bl" font-size="13.5">Italia</text><text x="1552.4" y="867.8" textLength="103.0" lengthAdjust="spacingAndGlyphs" class="bl" font-size="11.5">Civitas Vaticana</text><text x="1541" y="887.4" textLength="124.2" lengthAdjust="spacingAndGlyphs" class="bl" font-size="11.5">- Città del Vaticano</text><text x="872.6" y="959.7" textLength="38.7" lengthAdjust="spacingAndGlyphs" class="bl" font-size="11.5">Madrid</text><text x="639.3" y="1012" textLength="54.8" lengthAdjust="spacingAndGlyphs" class="bl" font-size="13.5">Portugal</text><text x="792" y="1032" textLength="48.0" lengthAdjust="spacingAndGlyphs" class="bl" font-size="13.5">España</text><text x="625.8" y="1060.1" textLength="34.5" lengthAdjust="spacingAndGlyphs" class="bl" font-size="11.5">Lisboa</text><text x="1698" y="332" textLength="36.0" lengthAdjust="spacingAndGlyphs" class="bl" font-size="11.5">Praha</text><text x="1717" y="362" textLength="43.0" lengthAdjust="spacingAndGlyphs" class="bl" font-size="13.5">Česko</text><g transform="translate(1419.9,341.2)"><ellipse cx="24" cy="30" rx="9" ry="12" transform="rotate(40 24 30)" fill="#000" opacity="0.22" filter="url(#blur)"/><path d="M12.5,40.5 C10.5,32 1,22.5 1,12.6 A11.5,11.5 0 0 1 24,12.6 C24,22.5 14.5,32 12.5,40.5Z" fill="url(#mg)" stroke="#2a70b8" stroke-width="1"/><circle cx="12.5" cy="12" r="4.5" fill="#fff"/></g><g transform="translate(1202.0,633.5)"><ellipse cx="24" cy="30" rx="9" ry="12" transform="rotate(40 24 30)" fill="#000" opacity="0.22" filter="url(#blur)"/><path d="M12.5,40.5 C10.5,32 1,22.5 1,12.6 A11.5,11.5 0 0 1 24,12.6 C24,22.5 14.5,32 12.5,40.5Z" fill="url(#mg)" stroke="#2a70b8" stroke-width="1"/><circle cx="12.5" cy="12" r="4.5" fill="#fff"/></g><g transform="translate(902.0,748.3)"><ellipse cx="24" cy="30" rx="9" ry="12" transform="rotate(40 24 30)" fill="#000" opacity="0.22" filter="url(#blur)"/><path d="M12.5,40.5 C10.5,32 1,22.5 1,12.6 A11.5,11.5 0 0 1 24,12.6 C24,22.5 14.5,32 12.5,40.5Z" fill="url(#mg)" stroke="#2a70b8" stroke-width="1"/><circle cx="12.5" cy="12" r="4.5" fill="#fff"/></g><g transform="translate(608.5,1023.3)"><ellipse cx="24" cy="30" rx="9" ry="12" transform="rotate(40 24 30)" fill="#000" opacity="0.22" filter="url(#blur)"/><path d="M12.5,40.5 C10.5,32 1,22.5 1,12.6 A11.5,11.5 0 0 1 24,12.6 C24,22.5 14.5,32 12.5,40.5Z" fill="url(#mg)" stroke="#2a70b8" stroke-width="1"/><circle cx="12.5" cy="12" r="4.5" fill="#fff"/></g><g transform="translate(1539.1,796.5)"><ellipse cx="24" cy="30" rx="9" ry="12" transform="rotate(40 24 30)" fill="#000" opacity="0.22" filter="url(#blur)"/><path d="M12.5,40.5 C10.5,32 1,22.5 1,12.6 A11.5,11.5 0 0 1 24,12.6 C24,22.5 14.5,32 12.5,40.5Z" fill="url(#mg)" stroke="#2a70b8" stroke-width="1"/><circle cx="12.5" cy="12" r="4.5" fill="#fff"/></g></svg></div>
<!-- zoom control -->
<div class="abs" style="left:595px;top:122px;width:34px;height:64px;border:2px solid rgba(0,0,0,0.22);border-radius:5px;background:#fff;background-clip:padding-box"></div>
<div class="abs" style="left:597px;top:153px;width:30px;height:1px;background:#ccc"></div>
<svg class="ico" style="left:606px;top:132px" width="13" height="13" viewBox="0 0 13 13"><path d="M6.5,0.5 L6.5,12.5 M0.5,6.5 L12.5,6.5" stroke="#000" stroke-width="2.4"/></svg>
<div class="abs" style="left:606.5px;top:167.5px;width:12px;height:2.4px;background:#000"></div>
<!-- user box -->
<div class="abs" style="left:1420px;top:130px;width:285px;height:59px;border-radius:7px;background:#2d3439;box-shadow:0 8px 24px rgba(0,0,0,0.18)"></div>
<svg class="ico" style="left:1430px;top:137px" width="48" height="48" viewBox="0 0 1100 1100">
<defs><clipPath id="av"><circle cx="550" cy="525" r="457"/></clipPath>
<radialGradient id="fg" cx="0.5" cy="0.45" r="0.55"><stop offset="0" stop-color="#c8c8c8"/><stop offset="0.75" stop-color="#9c9c9c"/><stop offset="1" stop-color="#4a4a4a"/></radialGradient>
<filter id="avb" x="-20%" y="-20%" width="140%" height="140%"><feGaussianBlur stdDeviation="25"/></filter></defs>
<g clip-path="url(#av)"><rect width="1100" height="1100" fill="#080808"/>
<g filter="url(#avb)">
<ellipse cx="540" cy="330" rx="330" ry="230" fill="#3c3c3c"/>
<ellipse cx="430" cy="190" rx="140" ry="70" fill="#7a7a7a"/>
<ellipse cx="700" cy="200" rx="110" ry="60" fill="#6a6a6a"/>
<ellipse cx="250" cy="330" rx="60" ry="50" fill="#555"/>
<ellipse cx="540" cy="520" rx="190" ry="245" fill="url(#fg)"/>
<ellipse cx="445" cy="410" rx="55" ry="28" fill="#555"/>
<ellipse cx="625" cy="410" rx="55" ry="28" fill="#555"/>
<path d="M425,585 Q540,620 655,585 Q620,680 540,680 Q460,680 425,585Z" fill="#e6e6e6"/>
<rect x="440" y="720" width="220" height="180" fill="#8c8c8c"/>
<path d="M260,1100 L300,900 Q540,780 830,830 L900,1100Z" fill="#b4b4b4"/>
</g></g></svg>
<div class="abs" id="welcome" style="left:1490px;top:150.5px;letter-spacing:-0.3px;font-size:16.5px;line-height:19px;font-weight:bold;color:#ececec;white-space:nowrap">Welcome, Jack</div>
<div class="abs" style="left:1618px;top:146px;width:73px;height:29px;border-radius:6px;background:#42484d"></div>
<div class="abs" id="logout" style="left:1630.5px;top:154px;letter-spacing:-0.6px;font-size:12.5px;line-height:14px;font-weight:bold;color:#ececec;white-space:nowrap">LOGOUT</div>
<!-- use position -->
<div class="abs" style="left:1069px;top:1000px;width:169px;height:35px;border-radius:7px;background:#00c46a;box-shadow:0 6px 20px rgba(0,0,0,0.16)"></div>
<svg class="ico" style="left:1089px;top:1009px" width="12" height="18" viewBox="0 0 12 18"><rect x="5.3" y="7" width="1.4" height="10" fill="#d8d8d8"/><circle cx="6" cy="5.5" r="4.2" fill="#e8177b"/><circle cx="4.8" cy="4.2" r="1.2" fill="#fff" opacity=".8"/></svg>
<div class="abs" id="usepos" style="left:1105px;top:1009px;letter-spacing:-0.4px;font-size:14px;line-height:17px;-webkit-text-stroke:0.45px #2d3439;color:#2d3439;white-space:nowrap">USE MY POSITION</div>
<!-- attribution -->
<div class="abs" style="left:1574px;top:1064px;width:149px;height:11px;background:rgba(255,255,255,0.8)"></div>
<div class="abs" style="left:1578px;top:1066px;width:9px;height:3.5px;background:#4c7be1"></div>
<div class="abs" style="left:1578px;top:1069.5px;width:9px;height:3.5px;background:#ffd500"></div>
<div class="abs" style="left:1589px;top:1064px;font-size:8px;line-height:11px;color:#333;white-space:nowrap;letter-spacing:-0.3px"><span style="color:#0078a8">Leaflet</span> | &#169; <span style="color:#0078a8">OpenStreetMap</span> contributors</div>

<!-- status bubble -->
<div class="abs" style="left:1px;top:1078px;width:87px;height:21px;background:#202120;border-radius:0 4px 0 0;border-top:1px solid #2a2a2a"></div>
<div class="abs" style="left:6px;top:1081px;font-size:12px;line-height:15px;color:#e8e8e8;white-space:nowrap">localhost:5173</div>
</body></html>
